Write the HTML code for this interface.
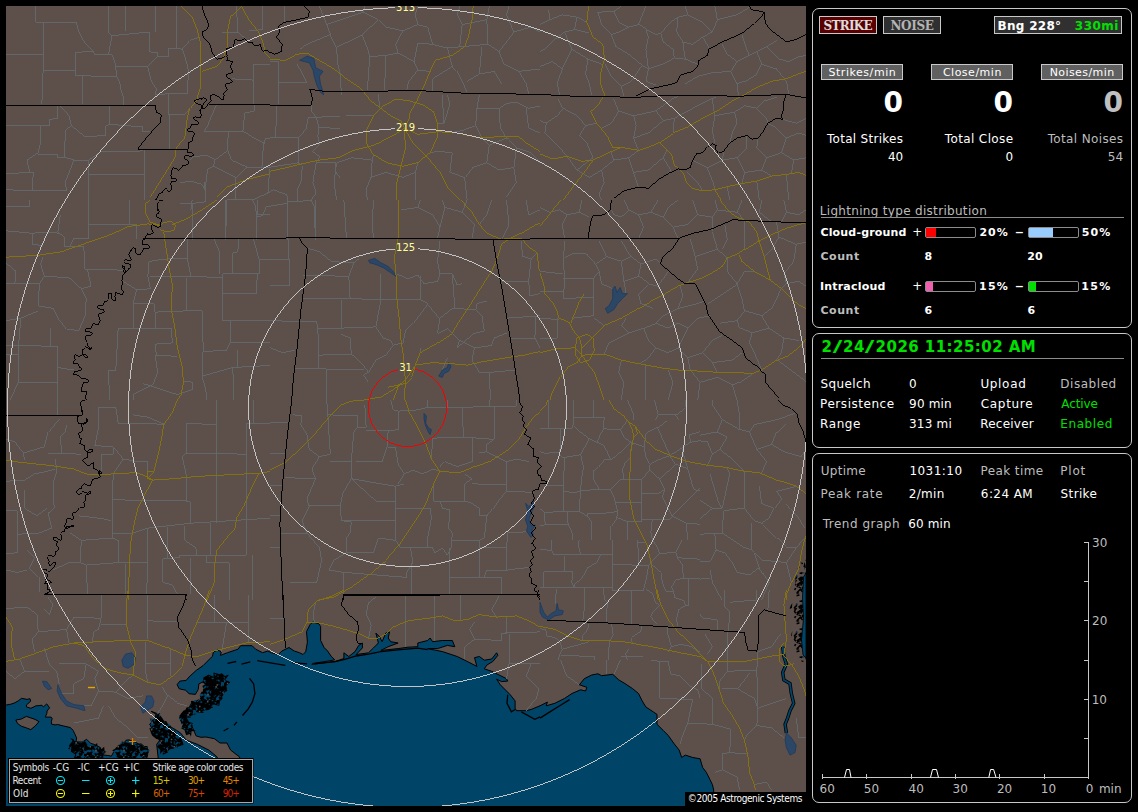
<!DOCTYPE html><html><head><meta charset="utf-8"><title>Lightning</title><style>
html,body{margin:0;padding:0;background:#000;}
body{width:1138px;height:812px;position:relative;overflow:hidden;font-family:"DejaVu Sans","Liberation Sans",sans-serif;font-size:12px;color:#fff;}
.a{position:absolute;white-space:nowrap;line-height:1;}
.panel{position:absolute;left:812px;width:318px;border:1px solid #c8c8c8;border-radius:7px;}
.btn{position:absolute;box-sizing:border-box;border:1px solid #c8c8c8;height:18px;}
.hdr{position:absolute;box-sizing:border-box;border:1px solid #c8c8c8;background:#606060;width:82px;height:16px;}
.g{color:#bdbdbd;}
.gr{color:#00e000;}
.b{font-weight:bold;}
.sf{font-family:"DejaVu Serif","Liberation Serif",serif;}
.cf{font-family:"DejaVu Sans Condensed","DejaVu Sans","Liberation Sans",sans-serif;}
.hr{position:absolute;height:1px;background:#8c8c8c;left:821px;width:303px;}
.bar{position:absolute;box-sizing:border-box;width:51px;height:11px;border:1px solid #8c8c8c;border-radius:2px;}
.bar i{display:block;height:9px;}
.sl{display:inline-block;transform:scaleX(1.75);margin:0 2.4px;}
</style></head><body>
<div id="map" style="position:absolute;left:6px;top:6px;width:800px;height:800px;background:#5d4f4a;overflow:hidden;"><svg width="800" height="800" viewBox="6 6 800 800" style="position:absolute;left:0;top:0;display:block"><defs><pattern id="mp" patternUnits="userSpaceOnUse" width="28" height="28"><rect width="28" height="28" fill="#004468"/><path d="M9.1,4.2 6.4,6.2 3.9,6.6 6.4,4.9 3.9,4.4M6.7,15.4 8.7,13.2 7.0,13.9M26.5,16.2 23.8,14.5 24.2,12.3 23.7,12.5M16.0,15.7 14.1,16.2 14.9,15.4 15.2,12.8 12.5,11.0M19.1,12.0 18.8,14.5 18.0,13.0 16.1,14.7M2.3,8.4 4.5,9.8 3.3,12.7 1.0,12.2M21.2,4.3 20.7,7.0 18.2,7.4 19.9,9.3M9.5,9.8 10.0,9.5 12.0,12.2 11.9,13.2M1.7,19.6 2.2,20.7 1.8,22.0 4.2,21.1 6.8,20.2M17.1,13.8 18.7,11.6 17.2,10.9M24.4,2.3 23.8,0.9 21.6,0.5 21.9,1.7M27.6,19.1 30.4,17.0 28.4,15.4 26.8,15.3M16.5,7.4 14.4,7.6 15.0,6.5M3.5,24.1 4.4,25.5 4.2,27.7 6.9,28.8 7.3,28.2M11.0,13.5 8.4,10.9 6.7,8.9 5.7,6.2M0.0,4.2 2.7,4.9 0.1,3.2M10.5,17.8 11.1,17.6 8.8,17.5 11.7,17.4M8.7,4.0 7.8,2.6 9.8,0.6 6.9,3.3 7.1,1.2M15.2,0.8 14.0,1.6 11.5,3.7 11.7,6.1 10.8,4.5M15.2,14.1 13.5,15.9 16.4,18.1 18.2,20.0 19.7,18.3M14.5,10.0 17.4,11.7 17.3,9.9M16.9,9.6 19.9,12.4 19.1,10.7 17.4,8.9 15.6,9.6M25.2,23.5 27.7,22.6 28.5,24.6 26.2,23.9M19.9,5.6 19.5,6.4 17.0,9.1M20.2,13.0 22.9,14.3 20.9,12.1 18.8,14.5 20.7,12.4M23.1,27.4 25.8,25.4 26.1,22.5 27.9,23.9 25.5,25.4M3.9,27.6 5.9,25.9 4.4,24.6M6.7,16.4 7.0,18.4 4.4,19.9 6.8,20.8M22.8,14.5 20.6,12.4 20.7,14.6 22.3,15.3 24.0,13.2M4.0,17.3 4.3,16.3 4.4,16.6M22.0,3.0 19.3,1.1 16.6,-1.3 16.3,-4.1 18.6,-6.7M9.1,27.3 9.2,28.4 8.9,28.6 8.8,31.3 10.0,33.5M26.4,7.3 28.7,5.5 28.4,5.0 27.8,3.9 28.8,3.4M6.0,8.5 8.3,6.4 9.6,7.4M4.0,24.7 2.3,27.4 1.7,27.4 4.6,29.4M4.5,12.1 3.9,11.6 3.1,9.2 2.3,8.2 2.0,9.4M10.8,14.5 10.8,11.9 13.7,13.6 16.6,11.2M7.4,1.1 6.1,-1.1 5.6,1.4M22.9,7.2 23.2,7.3 23.1,6.3M7.8,22.4 7.4,19.8 10.0,20.6M22.4,2.3 19.8,4.5 19.6,3.6M15.5,25.9 16.2,23.2 17.5,25.8 20.3,24.4M5.1,26.1 3.9,27.7 2.6,27.7 0.7,26.7 -2.2,25.2M0.4,20.5 3.3,20.6 1.8,20.3 2.7,21.2 3.7,21.5M24.9,27.2 26.0,30.1 25.1,32.1 26.3,32.9M11.3,9.7 13.4,6.8 14.1,9.1M12.1,1.6 14.1,3.8 15.1,2.5 13.6,1.2 13.3,-0.8M12.5,7.4 15.3,7.7 13.8,10.4 12.6,9.6M0.0,10.7 -1.3,11.6 -2.8,13.3 -5.3,15.2M4.0,16.4 1.2,15.3 -0.4,15.8 -0.3,17.3M18.4,20.0 17.7,19.0 20.7,16.9 22.0,17.8 19.3,19.8M25.0,17.6 26.2,17.6 28.6,19.1 29.1,21.0 26.1,22.1M22.3,19.9 23.2,17.4 20.5,18.2 23.2,17.5 22.9,14.8M0.5,14.9 0.5,11.9 2.2,13.4M14.1,15.0 14.2,16.5 14.1,18.3 16.2,16.7 17.7,15.1M18.2,12.9 15.7,15.4 14.4,12.6 15.2,10.8M16.8,9.3 18.3,8.1 18.7,5.2 16.0,3.8 17.1,5.0M18.9,8.1 17.6,7.9 19.2,10.9 19.5,9.8 17.0,9.6M8.1,2.1 10.9,1.8 9.5,0.1 12.2,-1.6 12.7,-3.8M14.7,26.7 15.3,27.5 14.0,25.1M10.2,13.9 9.6,11.9 12.3,13.0 11.7,14.3M11.7,10.5 13.7,7.5 15.2,9.6M3.4,25.9 0.4,27.4 -1.0,24.8 -1.7,27.0 -4.2,29.5M21.2,23.9 18.8,25.9 17.5,28.5 16.0,27.1M14.3,5.3 16.0,4.9 13.2,6.5 12.6,8.7M15.5,5.7 12.8,7.1 12.5,8.6M18.0,8.0 20.5,8.3 18.5,7.8M7.9,7.2 10.7,5.7 11.7,4.5 12.0,3.9 10.0,1.9M5.8,25.4 6.1,25.1 5.1,26.6 4.7,26.9M6.8,4.9 4.4,3.3 2.9,3.7 5.3,5.2 4.7,4.7M14.7,10.6 16.2,10.5 16.6,9.7 17.8,9.9M22.1,23.8 20.8,22.3 20.2,21.9M26.7,23.8 24.5,23.3 26.1,25.1M27.1,13.7 26.5,16.3 28.4,18.4M27.2,7.0 25.6,4.9 28.4,2.5M23.1,19.6 20.6,21.3 17.6,19.0 18.0,16.3M20.0,26.9 18.5,27.8 19.7,25.4 17.1,25.6 17.6,24.9M6.3,16.8 6.5,19.8 5.2,18.7M23.5,6.8 21.9,5.3 24.7,6.5 23.5,3.6 23.5,4.7M11.8,7.2 11.3,6.4 11.3,7.6 12.6,6.8 12.0,3.8M8.2,23.7 6.4,26.5 5.3,28.4M6.5,6.2 4.1,6.9 4.8,9.3 4.7,11.8M1.6,16.7 -1.1,13.8 -0.5,13.3 0.7,11.4M12.6,19.9 14.0,22.9 16.6,21.9 14.7,24.5M20.9,0.9 22.2,2.9 25.2,2.6 22.8,0.1 20.3,-0.4M24.8,15.7 24.1,17.3 22.9,19.1M2.5,19.7 1.7,22.3 -0.1,21.4M25.1,0.8 23.6,1.6 23.0,0.9 22.8,2.7M1.7,5.5 4.1,4.5 2.8,7.2M17.3,7.3 18.4,9.9 17.2,11.2 17.8,13.0 20.4,10.4M23.1,3.0 25.9,5.7 25.2,4.2 24.8,4.2 27.3,2.3M22.5,20.7 24.1,21.3 23.1,20.2 22.2,21.9 19.7,20.1M21.1,6.9 22.0,6.8 22.2,4.8M11.9,2.9 10.5,0.5 8.1,0.4M19.9,12.5 17.7,12.3 20.0,10.7M15.1,21.7 16.8,20.4 15.4,19.0M7.1,7.3 5.6,5.8 3.5,8.1 4.0,7.0M11.1,27.8 11.2,28.7 8.9,28.5 6.1,25.5 8.4,23.9M12.6,10.5 10.9,7.8 11.6,9.7 9.7,7.2M14.4,5.0 12.9,6.6 15.6,4.3 16.2,5.0 14.5,4.2M4.0,5.7 1.2,7.1 3.7,9.0 5.6,8.4M10.4,17.4 8.6,19.2 8.9,16.5M2.8,11.1 0.8,11.3 1.7,10.7 0.3,13.6 1.3,13.1M1.4,20.9 0.9,18.0 2.5,19.8 3.4,19.1M11.3,26.4 13.7,25.9 15.7,25.4 18.0,25.1M4.6,0.4 2.4,2.3 1.8,2.7 4.3,4.1 2.4,3.2M4.5,4.8 2.2,4.8 4.0,7.6M5.5,3.5 8.4,3.4 5.7,6.0M10.9,25.3 12.0,27.7 12.8,29.8 13.6,30.5 11.7,30.3M15.8,1.2 13.8,0.3 11.7,3.1 13.6,1.3 15.9,3.4M18.8,18.7 16.5,19.3 16.8,20.1 15.7,19.6M16.3,11.9 15.5,11.9 13.6,9.0 16.5,8.8 16.2,9.5M22.9,23.4 22.3,20.8 21.5,20.0 23.3,20.0M18.4,1.1 15.9,2.5 17.6,2.6M1.5,14.1 2.4,15.8 -0.4,13.2 0.3,14.4M3.1,3.7 1.8,5.6 3.6,6.7 4.9,5.0M23.3,17.1 21.3,19.5 19.9,21.4 17.8,21.4M25.8,5.8 26.5,4.3 25.7,2.5 25.1,3.3M7.8,9.2 5.8,10.9 3.5,11.1 4.3,10.2M24.4,15.5 25.6,17.9 24.1,18.1 26.2,19.6 25.5,18.8M10.3,4.1 11.9,3.7 10.0,5.2 7.3,7.1M7.1,17.9 9.7,20.3 11.1,21.8 9.4,20.5 10.2,20.0M10.2,1.3 8.6,2.3 5.7,-0.7 4.8,-3.1M10.0,6.3 8.8,4.1 8.0,6.1 6.0,3.1 7.8,4.4M12.6,1.8 14.9,3.5 14.3,2.1M0.3,18.1 2.7,18.6 3.1,19.2 3.3,19.2 1.2,16.2M1.7,0.7 0.1,-1.9 1.8,-4.9M15.4,26.3 14.9,26.5 15.8,27.3M11.6,17.2 10.5,16.0 7.8,18.3 9.5,19.6 6.5,21.7M20.9,13.0 21.8,11.1 24.8,9.6 25.6,7.4 28.0,9.9M26.4,7.4 25.0,7.7 24.6,9.4M14.7,7.4 17.2,9.8 14.7,9.8 12.8,12.3 14.8,10.5M4.5,25.6 6.7,24.6 5.2,27.0M17.7,19.4 19.7,19.6 19.5,19.8 16.6,17.0 19.3,15.4M24.8,22.1 25.5,19.6 28.0,17.4 25.1,15.1M26.0,9.7 27.2,6.8 25.0,7.7M1.2,1.9 -1.4,2.4 -2.2,4.3M22.9,25.0 25.2,26.5 26.5,25.8M6.9,5.7 4.1,7.8 6.0,8.6M23.1,17.7 23.0,15.5 24.7,16.4 23.5,15.4M7.3,9.8 4.6,11.4 7.1,13.0 7.7,12.9M8.1,20.9 5.2,21.0 2.8,20.8 0.1,21.2M20.0,23.2 21.9,21.2 18.9,19.4 20.5,22.3 17.5,22.2M13.8,22.3 16.6,22.9 19.3,23.0M16.2,4.4 18.8,2.8 16.8,5.5M21.5,13.7 21.8,11.4 20.8,8.9 23.4,11.3 24.8,10.8M18.1,10.4 16.7,12.8 16.7,12.1 19.0,10.5M12.9,14.9 14.4,15.8 13.5,14.7 11.4,16.8 12.4,18.2M4.7,12.3 5.2,10.0 5.0,12.4 3.4,10.5M8.4,19.7 6.4,17.6 4.9,16.6 5.0,14.5 4.0,12.7" fill="none" stroke="#000" stroke-width="1.5"/><path d="M27.3,20.4h1.5v1.5h-1.5zM2.9,26.9h1.5v1.5h-1.5zM2.8,10.8h1.5v1.5h-1.5zM27.5,22.3h1.5v1.5h-1.5zM20.5,12.2h1.5v1.5h-1.5zM5.5,17.9h1.5v1.5h-1.5zM3.0,5.8h1.5v1.5h-1.5zM10.9,1.0h1.5v1.5h-1.5zM11.2,22.1h1.5v1.5h-1.5zM19.4,14.0h1.5v1.5h-1.5z" fill="#5d4f4a"/></pattern><pattern id="mq" patternUnits="userSpaceOnUse" width="28" height="28"><rect width="28" height="28" fill="#5d4f4a"/><path d="M12.7,15.7 12.4,17.8 10.5,19.6 10.4,20.3M5.2,12.5 2.8,14.4 3.9,11.6M27.5,27.0 28.9,27.9 29.7,29.9 27.1,27.1 29.3,27.7M21.8,9.1 23.8,9.3 24.7,9.2 25.7,9.0 24.3,12.0M27.9,23.5 26.4,25.1 26.5,22.3 26.9,19.9 24.5,18.6M1.9,0.5 -1.1,-1.3 1.3,-1.4 4.2,-2.1 1.7,-1.3M21.8,7.6 20.7,4.6 20.1,7.2M3.8,19.8 1.1,21.6 -0.8,21.9M12.5,5.3 14.1,4.9 13.4,4.2 16.4,1.2 18.6,4.1M16.6,27.9 14.9,27.3 17.0,28.2M2.8,27.7 2.5,24.8 3.1,26.7M10.8,2.1 11.3,0.5 11.9,-0.2M12.7,26.9 14.7,24.7 14.0,25.4 12.9,23.8M17.1,20.3 18.5,23.0 16.7,25.7M24.7,16.9 22.0,14.6 22.1,13.1 23.5,12.4M11.8,25.3 10.5,23.4 11.9,20.8 10.2,21.2M23.9,17.2 22.1,19.7 23.6,17.1 23.1,15.6M1.3,7.9 1.7,5.7 0.9,8.0 3.8,9.0 4.9,9.5M3.9,1.0 3.8,0.1 2.6,-2.7M16.8,2.1 18.1,1.0 21.1,-1.5M15.3,20.6 16.7,18.4 19.5,17.5 17.0,17.3 14.5,19.4M26.4,0.8 26.9,1.6 26.2,2.1 26.8,-0.4M17.9,27.8 19.3,27.1 20.7,27.6 20.3,29.7M2.3,21.0 1.2,18.5 -1.7,21.3M3.2,21.8 5.7,20.4 2.8,19.2 3.8,17.4 1.8,19.8M18.5,12.4 17.4,13.4 15.6,13.0M22.6,25.6 21.9,26.1 20.8,23.9M13.9,23.4 15.2,26.1 13.8,24.2M12.6,7.7 14.6,7.0 14.7,8.0M20.1,23.6 19.8,21.0 17.0,23.3 14.2,24.5 14.6,23.4M22.2,0.5 21.6,-1.3 23.2,-2.7M21.8,22.3 19.5,20.0 19.7,20.8 18.9,18.3 17.1,20.2M7.2,20.0 7.4,17.2 5.7,18.9 6.0,21.6M14.0,27.9 13.4,29.7 15.8,27.2M26.1,20.2 25.8,18.4 28.1,15.4M15.4,18.3 17.2,20.9 17.0,21.8 15.2,23.2 17.1,24.0M20.1,6.0 23.0,8.8 23.2,10.6 22.1,13.0M24.0,9.8 21.2,8.8 20.7,7.5" fill="none" stroke="#000" stroke-width="1.5"/><path d="M25.8,6.1h1.5v1.5h-1.5zM24.3,12.0h1.5v1.5h-1.5zM1.0,14.9h1.5v1.5h-1.5zM19.2,25.6h1.5v1.5h-1.5zM13.2,28.0h1.5v1.5h-1.5zM25.2,14.5h1.5v1.5h-1.5zM19.0,12.3h1.5v1.5h-1.5zM24.6,16.2h1.5v1.5h-1.5zM19.3,21.2h1.5v1.5h-1.5zM12.3,15.6h1.5v1.5h-1.5z" fill="#004468"/></pattern></defs><rect x="6" y="6" width="800" height="800" fill="#5d4f4a"/><path d="M6.2,705 10.9,704.2 14.8,702.8 18.2,700.9 21.6,698.3 27.1,699.4 30,698.7 30.7,701.2 26.5,704.9 26.5,706.9 30.9,708.3 35.8,705.9 39.1,705.6 41.9,705.2 43.5,706.9 46.7,703.9 49.6,707.8 47,711 46.9,713.3 45.3,717.1 51.1,717.1 52.2,718.5 51.4,721.3 51.5,724.1 55.1,724.9 57.6,724.5 63.7,726 70.2,727.5 71.6,728.7 73.3,730.7 74.7,733.7 76.6,737.9 76.1,741.8 82.3,742.1 86.6,739.3 90.6,743.3 94.1,744.4 100.4,747.5 100.6,749.5 105.5,751.8 102.7,754.9 108.9,755.6 111.3,756.3 114.1,751.2 116.3,748.3 119.1,747 123.1,744.1 126.1,740.2 129,739.9 134.1,741.8 136.2,742.5 141.9,746.4 143,747.4 146.1,750.7 142.8,747.8 138.8,747.3 135.8,744.3 141.2,743.9 144.2,746.5 147.2,746.5 147.3,751.2 146.7,757.9 147.6,766.9 158.1,766.9 158.1,757 156.7,744.4 160.9,738.7 153.2,731 149.7,724 154.6,719.8 156,714.1 151.1,711.3 156.7,713.4 158.1,719.1 162.3,721.9 169.4,726.1 176.4,730.3 180.6,733.1 186.2,740.1 197.5,744.4 208.7,750 217.2,757 217.2,766.9 239.7,766.9 239.7,757 230.5,750 227,743 220,743 214.4,738.7 205.9,737 201,737.3 196.1,735.9 191.9,726.1 182,716.9 187.6,710.6 191.9,702.2 200.3,699.4 206.6,692.3 204.5,681.1 198.9,683.9 198.2,689.5 195.4,694.4 189.1,693.7 185.5,690.2 179.2,688.8 177.1,684.6 179.9,681.1 186.2,680.4 189.1,676.9 196.1,670.5 203.1,665.6 208.7,660 212.5,656.2 213.4,651.8 217.8,650.1 221.3,651.8 220.4,655.4 227.5,652.7 238,649.2 240.6,645.7 252.1,645.7 255.6,649.2 262.6,652.7 267.9,651 271.4,652.7 278.4,654.5 281.9,651 289,647.5 294.2,651 299.5,652.7 303,654.5 305.7,651.8 307.4,642.2 306.5,631.6 310.1,624.6 312.7,622 318.8,623.7 320.6,626.4 320.6,640.4 324.1,647.5 327.6,651 331.1,656.2 334.7,659.8 331.1,660.6 313.6,663.3 311.8,664.3 335.3,661.4 343.9,658.5 343.9,652.8 348.8,656.5 355,651.6 358.7,645.4 362.4,643 362.4,647.9 356.2,654.5 368.5,652.8 373.5,647.9 378.4,643 375.9,633.1 379.6,636.8 382.1,641.7 385.8,633.1 389.5,631.9 388.2,638 390.7,641.7 398.1,643 388.2,646.7 380.9,650.4 398.1,648.6 408,647.2 417.8,646.7 417.8,643 427.7,640.5 430.1,638 432.6,641.7 442.4,640.5 452.3,640.5 454.8,646.7 447.4,645.4 437.5,648.6 427.7,648.6 442.4,651.6 457.2,656.5 467.1,661.4 476.9,666.4 474.5,657.7 479.4,656.5 484.3,660.2 491.7,659 496.6,652.8 497.9,655.3 492.9,661.4 486.8,665.1 484.3,668.8 491.7,671.3 499.1,675 506.5,678.7 507.7,681.1 501.6,681.6 496.6,679.2 500.3,684.8 506.5,691 510.2,694.7 515.1,700.9 515.1,708.2 516.4,710.7 526.2,710.7 531.1,709.5 540,705.8 547.4,702.1 546.2,705.8 554.8,703.3 564.6,698.4 572,693.5 580.6,689.8 585.6,691 586.8,687.3 579.4,684.8 584.3,678.7 591.7,675 597.9,673.8 601.6,675.7 612.7,674.3 618.8,679.9 625,683.6 632.4,688.5 638.5,693.5 642.2,700.9 645.9,707 653.3,711.9 657,714.4 657,724.3 663.2,730.4 668.1,735.3 674.3,744 679.2,750.1 681.7,757.5 685.3,755.1 692.7,757.5 700.1,758.8 702.6,767.4 706.3,772.3 710,779.7 712.4,784.6 713.7,790 713.7,811.7 6,812 0,812 0,705Z" fill="#004468" stroke="#000" stroke-width="1" stroke-linejoin="round"/><path d="M15.8,720 21.1,719.1 26.4,716.4 35.1,719.4 39,721.7 35.1,726.1 30.8,729.6 26.4,727.9 21.1,726.1 17.6,723.5Z" fill="#5d4f4a" stroke="#000" stroke-width="1"/><g fill="url(#mp)"><path d="M202.6,678 208.6,674.6 210,675.3 213.6,676.8 213.4,672.5 220.1,674.3 222.5,671.8 223.6,675.2 225.2,676.1 229.2,674.3 225.2,679.9 230.4,682 227.1,685.2 226.7,687.1 227.3,691 224.8,692.1 223.2,695.7 222.1,695.9 223.5,701.2 220,700.7 219.3,705.7 212.4,704.4 213,707.9 211.7,707.8 208.7,710.1 203.4,710.7 204,713 199.6,712.7 194.7,711.8 196.2,714 190.5,715.9 190.7,717.8 186.6,717.8 189.1,722 191,722.5 192.7,723 192.2,729 195.9,730.9 191.6,731.2 190.9,737.9 191.1,738 189.7,734 186.1,735.2 184.6,730.2 181.1,728.2 183.4,722.9 181.3,724.7 180.6,721.8 179,718.2 179.7,715.7 179,716.1 183.6,710.6 185.3,710.1 186.5,707.4 189.4,706.9 191.8,704.1 190.7,700.9 193.4,700.8 199,699.9 200.5,697.6 199.5,695.2 203.5,688.8 202,686 205.8,684.2 202.4,683 203.7,677.1Z"/><path d="M152.6,725.4 149.8,718.4 155.7,719.3 156.7,714.6 158.2,713.7 159.9,713.2 161,716.3 164.4,721.3 167.4,720.8 166.6,721.2 166.3,721.8 170.4,725.2 171.8,730 174,730.4 173.9,729.7 175.8,732.4 178.1,739 180.4,736.9 182.9,742.2 183.5,744.9 181.2,745.5 176.6,747.7 177.3,744.7 173.8,748.8 169.8,749.3 167.5,752.8 165.1,753.8 161.8,755.6 162.2,754.9 160,754.8 160.3,750.1 157.2,746.8 159.2,743.5 159.8,741.5 158,739.3 156.3,738.9 152.1,735.4 151.1,733.3 149.3,728.1 150.3,728.6Z"/><path d="M112,750.4 115.1,748.8 118.9,744.2 118.2,746.3 121.9,741.4 128.7,743.1 130.8,743.6 132.8,742.4 135.7,746.6 138.1,746.5 141.3,744.2 144.2,748.1 144.3,746.5 149.7,750 148.1,755 147.3,758.1 144.8,760.3 142.4,761 141.9,756.7 135.4,757.3 137,758.4 132.6,757.7 129.3,758.2 125.8,759.2 124.3,760.9 122.1,761 120.3,761.3 116.7,757 116.8,758.3 116.2,753.4Z"/><path d="M70.1,738.2 73.4,739 74.1,740.7 81,743.3 82.7,740.8 83.9,741.6 85,741.2 88.2,745.9 94.3,745.8 97.1,743.1 97.6,745.9 101.6,748.9 104.2,746.7 104.6,751.6 106,750.9 103.3,752.5 103.3,758.6 98.8,757.7 97.9,759.1 95.1,760.6 90.4,758.3 88.1,758.4 83.1,757.7 83.7,756.4 77,759.4 75.5,758.9 73.8,757.9 75.3,754.4 71,751.7 70.9,749.3 68.2,748.9 68.9,745.5 72.7,740.7Z"/></g><path d="M805.9,559.5 802.1,562.5 799,562 801.6,562.8 799.2,567.5 796.2,569 797.8,571.8 797.4,573.3 795,575.8 795.5,581.7 795.4,583.8 794,586.3 792.4,587.2 794.3,591.5 792.8,591.5 791.8,594.6 791.4,599.5 790.7,602.4 792.9,601.6 790.5,606 789.6,608.4 793.6,609.8 792.9,612.5 793.3,618.2 792.3,617.4 792.3,622.2 791.5,622.9 792.8,628.8 792,629.3 792.3,630.7 791.5,633.5 791,639.3 788.2,640.2 791.2,641.6 790.6,648 794.2,647.5 793.8,653.8 793.4,654.4 794.2,655.5 798.2,658.4 800.1,658.3 801.9,662 806.3,660.8 805.6,660.4 806.3,654 807.2,652.7 805.7,649.8 805.8,647.7 804.4,646.4 804.4,644.5 804.1,641.9 807.2,638.3 806.8,634.7 807,632.9 804.9,632.6 805.6,627.7 807.4,625.1 806.7,621.8 807.4,619.6 804.2,620 804.7,617.3 807.9,613.5 804,608.7 804.8,607.5 806.4,607.3 805.4,601.5 806.2,598.9 804.3,598.1 806.8,593.6 805.8,593.6 807.1,589.8 807.5,586.5 806.9,586.3 807.5,582.7 804.4,578.4 806.1,576.4 806.5,573.5 807.1,571.5 804.1,568.8 805.8,567.8 805.6,563.7 805.9,564.3Z" fill="url(#mq)"/><path d="M806,573 803.5,577 802.5,598 803.5,618 801.5,640 803,655 806,658Z" fill="#004468" stroke="#000" stroke-width="0.8"/><g fill="none" stroke="#000" stroke-width="1.3"><path d="M507.7,694.7 507,703.3 511.4,711.9 515.1,709.5"/><path d="M521.3,711.9 534.8,719.3 540,716.9"/><path d="M540,718.1 549.9,711.9 559.7,705.8 569.6,699.6"/><path d="M314.3,663.9 335.3,661.7 343.9,659.7 356.2,656 368.5,654.1 380.9,651.6 398.1,649.9 417.8,648.1 427.7,649.6"/><path d="M292.2,662.7 307,663.9"/><path d="M257.3,660.6 264.4,661.9 274.9,663.6 285.4,665.4"/><path d="M227.5,663.3 236.2,661.5"/><path d="M241.5,664.1 250.3,661.9"/><path d="M249.5,678.3 253.7,683.9 254.9,693.7 252.3,702.2 248.1,709.2 242.5,715.5"/><path d="M236.9,721.9 234,725.4"/><path d="M228.4,728.2 223.5,731"/></g><path d="M35.7,6.2 35.7,22.2 76.4,22.2 78.8,32 85,43.1 89.9,48 93.6,51.7M43.1,22.2 43.1,70.2 41.9,103.5M5.9,54.7 43.1,54.7M43.1,70.2 75.1,70.2M75.1,52.2 75.1,75.1 82.5,75.9 82.5,103.5M75.1,52.2 93.6,51.7 94.8,54.7 112.1,54.7 115.8,65.3 116.3,76.4 82.5,75.9M108.4,6.2 108.4,32 112.1,35.7 108.4,54.7M112.1,35.7 149,32 149,51.7 157.7,53 157.7,56.2M125.6,6.2 125.6,30.8M155.2,6.2 155.2,32M176.1,6.2 176.1,48 168.8,48 168.8,56.2 157.7,56.2 147.8,66.5 116.3,66M147.8,66.5 151.5,81.3 156.4,88.7 155.2,94.8M116.3,76.4 119.5,81.3 120.7,88.7 123.2,96.1 123.2,104.7M176.1,48 182.3,49.3 189.7,40.6 199.5,37M182.3,49.3 187.2,64.1 188.5,71.4 187.2,93.6 170,93.6 156.4,94.8M168.8,93.6 168.8,108.4 170,149.3M168.8,114.6 184.8,114.6 189.7,108.4M57.9,105.9 57.9,118.2 49.3,119.5 49.3,125.6 5.9,125.6M40.6,125.6 40.6,142.9 38.2,152.7 27.1,160.1 29.6,172.4 5.9,173.7M60.4,105.9 69,115.8 71.4,125.6 85,136.7 105.9,135.5 105.9,125.6 109.6,124.4 109.6,105.9M71.4,125.6 65.3,130.6 64.5,157.7 57.9,157.7 57.2,154 38.2,154M109.6,124.4 142.9,126.9 142.9,131.8 150.3,131.8M64.5,157.7 73.9,160.1 88.7,160.1 101,151.5 138,151.5 144.1,149.8M73.9,160.1 65.3,182.3 66.5,190.9 32,190.9 33.3,172.4 29.6,172.4M88.7,160.1 88.7,200M88.7,174.9 144.1,174.9 144.1,150.3M144.1,174.9 144.1,200M5.9,189.7 32,190.9M253.7,64.1 253.7,103.5M231.6,78.8 253.7,80.1M253.7,64.1 270,64.1M236.5,6.2 237.7,32 246.4,39.4M262.4,6.2 262.4,29.6 248.8,30.8M221.7,32 237.7,32M204.5,182.3 205.7,200M284.8,6.2 284.8,22.2M270,61.6 278.6,61.6 278.6,103.5M278.6,82.5 307,82.5M297.1,64.1 307,82.5M319.3,6.2 326.7,24.6 330.4,34.5 336.5,46.8 337.7,64.1 340.2,73.9 341.4,94.8M326.7,24.6 363.6,12.3 364.8,6.2M330.4,34.5 307,44.3 299.6,49.3M363.6,12.3 378.4,19.7 385.8,27.1 403,30.8 417.8,24.6 415.3,14.8 417.8,6.2M362.4,34.5 367.3,46.8 369.8,56.7 367.3,89.9M336.5,46.8 362.4,34.5 378.4,19.7M369.8,56.7 385.8,55.4 384.6,89.9M385.8,55.4 398.1,53 395.6,44.3 403,30.8M398.1,53 414.1,61.6 417.8,70.2 408,82.5 406.7,89.9M417.8,70.2 430.1,71.4M417.8,24.6 427.7,27.1 432.6,44.3 417.8,43.1 414.1,61.6M432.6,44.3 447.4,48 459.7,46.8 462.2,24.6 457.2,14.8 459.7,6.2M447.4,48 452.3,66.5 457.2,71.4 462.2,81.3 467.1,92.4M452.3,66.5 432.6,78.8 432.6,91.1M462.2,24.6 486.8,19.7 489.3,6.2M486.8,19.7 488,44.3 459.7,46.8M488,44.3 499.1,51.7 504,64.1 518.8,71.4 540,69M499.1,51.7 513.9,32 531.1,27.1 540,32M513.9,32 506.5,14.8 509,6.2M481.9,46.8 479.4,73.9 467.1,81.3M501.6,83.8 494.2,71.4 479.4,73.9M518.8,71.4 526.2,83.8 528.7,93.6M346.4,115.8 373.5,115.8M378.4,93.6 379.6,108.4M351.3,157.7 336.5,162.6 334.1,182.3 336.5,200M351.3,157.7 372.2,160.1 373.5,155.2M372.2,160.1 371,177.4 366.1,189.7 367.3,200M371,177.4 385.8,172.4 403,177.4 415.3,172.4 417.8,162.6M415.3,172.4 415.3,200M442.4,94.8 443.7,123.2 449.8,103.5 447.4,94.8M443.7,123.2 437.5,123.2M479.4,94.8 476.9,108.4 475.7,125.6 462.2,130.6 449.8,133M475.7,108.4 499.1,108.4 506.5,103.5 516.4,102.2 528.7,108.4 540,105.9M499.1,108.4 500.3,128.1 506.5,138M475.7,125.6 481.9,138 489.3,145.3 486.8,162.6 472,167.5 464.6,177.4 467.1,200M452.3,152.7 449.8,172.4 464.6,177.4M452.3,152.7 437.5,151.5 430.1,152.7M489.3,145.3 506.5,138 516.4,147.8 531.1,152.7 540,162.6M516.4,147.8 513.9,167.5 516.4,182.3 506.5,197.1M486.8,162.6 499.1,170 513.9,167.5M526.2,108.4 528.7,128.1 540,133M548.6,9.9 549.9,19.7 562.2,14.8 577,17.2 586.8,22.2M549.9,19.7 540,24.6M577,17.2 574.5,29.6 564.6,32 554.8,39.4 544.9,49.3 540,51.7M574.5,29.6 589.3,33.3M564.6,32 572,49.3 588,59.1 601.6,64.1M588,59.1 585.6,73.9 589.3,83.8 591.7,94.8M572,49.3 562.2,69 552.3,61.6 540,66.5M562.2,69 557.2,83.8 559.7,94.8M597.9,12.3 613.9,11.1 621.3,6.2M613.9,11.1 618.8,22.2 628.7,27.1 638.5,24.6 645.9,6.2M597.9,12.3 601.6,24.6 611.4,34.5 618.8,32 628.7,27.1M611.4,34.5 616.4,46.8 628.7,54.2 642.2,65.3 648.4,69M645.9,29.6 648.4,37 645.9,49.3 648.4,69 645.9,81.3 655.8,85M645.9,29.6 638.5,24.6M645.9,29.6 655.8,34.5 660.7,33.3 670.6,22.2 678,17.2 687.8,14.8 685.3,6.2M660.7,33.3 663.2,41.9 673,49.3 674.3,57.9 663.2,64.1 648.4,69M674.3,57.9 685.3,59.1 697.7,64.1M678,17.2 676.7,32 682.9,41.9 692.7,44.3 702.6,37 712.4,32 717.4,19.7 714.9,6.2M682.9,41.9 684.1,51.7 685.3,59.1M702.6,37 710,49.3M687.8,14.8 702.6,22.2 712.4,32M717.4,19.7 737.1,14.8 749.4,7.4M605.3,64.1 611.4,76.4 621.3,86.2 631.1,81.3 642.2,65.3M621.3,86.2 623.8,96.1M722.3,44.3 727.2,54.2 737.1,61.6 749.4,55.4 756.8,51.7 766.6,46.8 776.5,40.6M742,34.5 749.4,55.4M737.1,61.6 730.9,71.4 737.1,83.8 738.3,94.8M730.9,71.4 712.4,72.7 697.7,76.4 685.3,83.8M756.8,51.7 761.7,64.1 776.5,69 786.4,81.3M766.6,46.8 779,59.1 788.8,61.6 798.7,56.7 806.1,55.4M761.7,64.1 756.8,73.9 744.5,81.3 737.1,83.8M786.4,81.3 788.8,93.6M558.5,98.5 563.4,108.4 557.2,115.8 546.2,123.2 544.9,133 552.3,140.4 559.7,147.8 567.1,156.4M563.4,108.4 577,115.8 585.6,125.6 579.4,135.5 586.8,142.9 593,157.7M585.6,125.6 596.7,123.2M613.9,98.5 618.8,110.9 611.4,123.2 601.6,128.1M618.8,110.9 633.6,115.8 636.1,125.6 633.6,138 638.5,150.3M633.6,115.8 655.8,110.9 673,98.5 678,96.6M655.8,110.9 663.2,120.7 674.3,118.2 673,133M663.2,120.7 648.4,133 633.6,138M674.3,118.2 692.7,108.4 712.4,98.5 716.1,97.3M712.4,98.5 714.9,115.8 712.4,130.6 714.9,142.9M714.9,115.8 734.6,112.1 744.5,105.9 756.8,108.4 764.2,101 776.5,97.3M734.6,112.1 737.1,123.2 732.2,133 729.7,142.9M756.8,108.4 766.6,118.2 767.9,123.2M540,120.7 546.2,123.2M567.1,156.4 577,170 593,157.7M577,170 589.3,177.4 601.6,170 613.9,160.1 611.4,151.5M601.6,170 604.1,182.3 599.1,194.6 601.6,200M613.9,160.1 628.7,157.7 633.6,172.4 638.5,187.2M628.7,157.7 638.5,150.3M633.6,172.4 648.4,170 663.2,157.7 666.9,150.3M663.2,157.7 670.6,170 668.1,173.7M687.8,172.4 697.7,182.3 702.6,190.9M692.7,160.1 707.5,167.5 722.3,160.1 723.5,151.5M707.5,167.5 712.4,179.8 714.9,189.7M722.3,160.1 737.1,157.7 746.9,147.8 746.9,135.5M737.1,157.7 744.5,172.4 742,183.5M744.5,172.4 761.7,170 771.6,176.1M761.7,170 766.6,157.7 756.8,147.8 758,138.4M766.6,157.7 781.4,152.7 786.4,138 776.5,128.1 767.9,123.2M781.4,152.7 793.7,160.1 806.1,157.7M793.7,160.1 791.3,173.7M786.4,138 798.7,133 806.1,135.5M782.7,119.5 796.2,123.2 806.1,118.2M727.2,186.7 729.7,200M756.8,181.1 759.3,200M786.4,174.4 788.8,200M29.6,200 29.6,206.2 5.9,206.2M88.7,200 88.7,224.6 136.7,224.6 136.7,239.4M88.7,224.6 88.7,238.2 73.9,238.2 70.2,245.6M5.9,230.8 32,233.3 44.3,232 60.4,233.3M60.4,214.8 57.9,232 64.1,237 64.1,246.8 83.8,246.8 85,269 123.2,270.2M32,233.3 32,244.3 43.1,245.6M5.9,262.8 16,271.4 14.8,283.8 5.9,283.8M43.1,256.7 40.6,264.1 44.3,276.4 39.4,283.8 14.8,283.8M44.3,276.4 69,277.6 81.3,288.7 91.1,286.2 87.5,270.2M39.4,283.8 38.2,305.9 53,308.4 57.9,318.2 66.5,329.3 78.8,330.6 85,315.8 86.2,298.5 81.3,288.7M38.2,310.9 20.9,318.2 18.5,345.3 5.9,345.3M18.5,345.3 57.9,346.6 57.9,367.5 73.9,370M50.5,328.1 50.5,346.6M5.9,320.7 20.9,318.2M18.5,345.3 18.5,382.3 57.9,382.3 57.9,367.5M18.5,382.3 9.9,400M57.9,382.3 57.9,400M5.9,354 18.5,354M129.3,200 129.3,224.6M192.2,200 190.9,209.9M225.4,200 225.4,238.2M257.4,200 257.4,214.8 270,214.8M149,261.6 162.6,259.1 187.2,258.6 187.2,238.2M187.2,258.6 190.9,276.4 222.9,277.6 222.9,273.9 259.9,273.4 259.9,259.1 270,259.1M214.3,239.4 219.3,251.7 219.3,273.9M239,239.4 237.7,251.7 232.8,253 232.8,273.4M253.7,239.4 258.7,259.1M149,261.6 147.8,276.4 150.3,288.7 136.7,289.9 123.2,281.3M150.3,276.4 190.9,276.9M136.7,289.9 133,303.5 133,328.1 118.2,328.1 115.8,370 108.4,370 109.6,400M186,277.6 186,310.9 155.2,312.1 154,303.5 133,303.5M155.2,312.1 155.2,328.1 133,328.1M186,310.9 202,310.9 203.2,347.8 202,376.1 232.8,367.5 256.2,366.3 270,365.1M222.9,277.6 222.9,320.7 270,320.7M222.9,293.6 256.2,293.6 257.4,273.9M230.3,320.7 230.3,342.9 226.6,350.3 203.2,351.5M237.7,350.3 237.7,367.5M230.3,342.9 270,342.9M155.2,328.1 171.2,328.1 172.4,342.9 155.2,344.1 156.4,355.2 177.4,356.4M155.2,355.2 157.7,372.4 152.7,384.8 133,394.6 133,400M142.9,383.5 177.4,394.6 192.2,389.7 192.2,382.3 183.5,381.1M202,376.1 205.7,389.7 206.9,400M232.8,367.5 234,400M287.2,200 287.2,238.2M315.6,200 315.6,238.2M343.9,200 346.4,238.2M373.5,200 372.2,224.6 373.5,238.2M288.5,239.4 289.7,285 270,285M270,259.1 288.5,259.1M270,320.7 316.8,321.9 318,334.3 318,368.8 294.6,368.8M270,347.8 282.3,352.7 294.6,350.3M307,248 319.3,251.7 331.6,261.6 353.8,262.8 358.7,259.1M303.3,275.1 348.8,276.4 353.8,262.8M348.8,276.4 350.1,298.5 302,298.5M350.1,298.5 380.9,299.8 380.9,273.9M380.9,299.8 420.3,299.8 420.3,276.4M341.4,299.8 341.4,328.1 318,328.1M341.4,328.1 375.9,326.9 380.9,299.8M341.4,334.3 350.1,338 351.3,354 318,355.2M375.9,326.9 383.3,338 390.7,340.4 393.2,345.3 385.8,355.2 375.9,360.1 368.5,372.4 363.6,374.9 368.5,382.3M351.3,354 361.1,362.6 368.5,372.4M326.7,370 326.7,400M318,368.8 363.6,370M396.9,273.9 408,278.8 417.8,275.1 424,283.8 437.5,281.3 440,273.9M440,240.6 437.5,261.6 440,273.9 452.3,273.9 457.2,285 462.2,283.8M420.3,299.8 427.7,303.5 412.9,323.2 405.5,330.6M427.7,303.5 440,318.2 452.3,308.4 475.7,309.6 476.9,303.5 486.8,301M440,318.2 437.5,333 447.4,328.1 459.7,340.4 457.2,347.8 474.5,333 484.3,330.6 481.9,315.8 475.7,309.6M405.5,330.6 403,342.9 393.2,345.3M420.3,347.8 420.3,352.7M459.7,340.4 474.5,347.8 491.7,345.3 494.2,338 506.5,333M452.3,273.9 454.8,308.4M474.5,347.8 472,360.1 479.4,372.4 489.3,372.4 490.5,400M489.3,372.4 516.4,370M447.4,357.7 442.4,370M521.3,240.6 522.5,256.7 531.1,259.1 537.3,253M501.6,281.3 528.7,281.3 531.1,259.1M528.7,281.3 529.9,296.1 540,293.6M506.5,318.2 540,315.8M536.1,315.8 534.8,338 540,347.8M510.2,338 534.8,338M400.6,209.9 417.8,207.4 432.6,214.8 440,227.1 437.5,238.2M417.8,207.4 420.3,200M442.4,200 444.9,207.4 440,227.1M444.9,207.4 462.2,212.3 474.5,224.6M462.2,212.3 467.1,200M474.5,224.6 472,238.2M491.7,200 486.8,214.8 479.4,224.6M506.5,200 509,224.6 501.6,239.4M526.2,200 528.7,214.8 540,209.9M564.6,240.6 563.4,261.6 564.6,278.8 563.4,298.5M540,271.4 563.4,273.9M563.4,278.8 593,278.8 593,297.3 563.4,298.5M593,297.3 593,315.8 572,318.2M564.6,257.9 574.5,253 586.8,254.2 595.4,264.1 599.1,271.4 593,278.8M599.1,240.6 606.5,256.7 595.4,264.1M606.5,256.7 621.3,261.6 631.1,256.7 641,264.1 638.5,276.4 623.8,281.3 621.3,261.6M621.3,240.6 626.2,249.3 631.1,256.7M641,264.1 655.8,259.1 660.2,263.6M638.5,276.4 648.4,283.8 658.2,286.2 668.1,271.4M540,291.1 563.4,291.1M540,318.2 558.5,319.5M557.2,318.2 557.2,338 540,338M594.2,318.2 604.1,325.6M599.1,271.4 601.6,283.8 612.7,288.7M623.8,281.3 626.2,293.6M648.4,283.8 638.5,293.6 641,303.5 653.3,308.4M658.2,286.2 663.2,294.8M626.2,318.2 621.3,325.6 628.7,333 643.5,328.1 655.8,323.2 663.2,315.8 678,308.4 682.9,296.1 680.4,286.2M655.8,323.2 668.1,328.1 678,323.2 687.8,328.1 697.7,318.2 710,315.8M678,308.4 697.7,303.5 705.1,301M604.1,354 609,342.9 618.8,338 628.7,333M643.5,328.1 648.4,340.4 655.8,347.8 648.4,357.7 638.5,363.8M655.8,347.8 668.1,352.7 678,347.8 687.8,328.1M678,347.8 687.8,357.7 690.3,370M687.8,357.7 702.6,352.7 712.4,340.4 722.3,335.5M702.6,352.7 712.4,362.6 717.4,372.4M712.4,362.6 732.2,360.1 742,352.7M621.3,360.1 618.8,372.4 623.8,382.3 621.3,400M645.9,365.1 645.9,400M668.1,370 673,382.3 668.1,400M690.3,370 700.1,382.3 697.7,400M700.1,382.3 717.4,377.4 732.2,384.8 739.5,382.3 751.9,373.7M732.2,384.8 737.1,400M690.3,239.4 695.2,256.7 697.7,269 687.8,282.5M695.2,256.7 717.4,249.3 727.2,257.9M717.4,249.3 712.4,232M724.8,224.6 727.2,239.4 722.3,249.3M727.2,257.9 727.2,271.4 737.1,283.8 744.5,271.4 754.3,271.4M737.1,283.8 707.5,303.5M737.1,283.8 742,298.5 744.5,310.9 737.1,320.7 719.8,323.2M744.5,310.9 761.7,315.8 771.6,308.4 781.4,288.7M761.7,315.8 769.1,328.1 783.9,338 798.7,340.4M769.1,328.1 751.9,333 749.4,342.9 754.3,352.7 761.7,370M737.1,320.7 739.5,328.1 751.9,333M744.5,220.9 744.5,249.3M776.5,222.2 779,237 796.2,244.3 806.1,241.9M779,237 771.6,249.3 764.2,256.7M796.2,244.3 793.7,261.6 783.9,273.9 786.4,283.8 798.7,281.3 806.1,286.2M786.4,283.8 781.4,288.7M776.5,360.1 806.1,382.3M783.9,338 781.4,352.7 776.5,360.1M623.8,200 628.7,209.9 621.3,217.2 613.9,214.8 611.4,209.9M628.7,209.9 638.5,214.8 650.9,212.3 658.2,200M638.5,214.8 643.5,227.1 638.5,238.9M650.9,212.3 663.2,217.2 673,227.1 678,238.2M663.2,217.2 668.1,207.4 678,200M673,227.1 687.8,224.6 697.7,214.8 692.7,200M697.7,214.8 712.4,217.2 717.4,209.9 714.9,200M712.4,217.2 712.4,230.8M717.4,209.9 737.1,212.3 742,200M737.1,212.3 744.5,220.4M761.7,200 759.3,212.3 771.6,221.7M783.9,200 786.4,212.3 798.7,214.8 806.1,209.9M786.4,212.3 781.4,222.2M540,207.4 549.9,212.3 559.7,209.9 567.1,214.8 562.2,224.6 564.6,238.9M567.1,214.8 579.4,212.3 589.3,217.2M579.4,212.3 581.9,200M57.9,400 57.9,415.3M98.5,407.4 98.5,427.1 94.8,445.6 113.3,446.8 113.3,454.2 101,454.2 101,471.4M98.5,407.4 115.8,407.4 118.2,423.4 147.8,423.4 165.1,424.6M216.8,400 216.8,424.6 186,423.4 186,453 246.4,454.2 246.4,423.4 270,423.4M216.8,424.6 216.8,523.2M253.7,400 253.7,423.4M133,414.8 147.8,417.2 165.1,424.6M113.3,446.8 123.2,459.1 138,461.6 147.8,461.6 147.8,471.4M123.2,459.1 113.3,473.9 112.1,498.5 112.1,538 81.3,540.4 80.1,562.6 86.2,565.1 87.5,594.6M186,453 182.3,456.7 186,473.9 186,501 190.9,502.2 190.9,523.2 147.8,528.1 133,533 112.1,533M112.1,499.8 186,501M246.4,454.2 246.4,555.2 179.8,555.2 179.8,557.7 162.6,558.9 162.6,582.3 172.4,584.8 177.4,594.1M190.9,523.2 270,518.2M210.6,523.2 210.6,555.2M184.8,525.6 184.8,540.4 195.8,547.8 197.1,555.2M167.5,526.9 167.5,557.7M147.8,528.1 147.8,562.6 118.2,562.6 118.2,540.4 112.1,538M147.8,562.6 146.6,594.1M125.6,563.8 125.6,594.1M86.2,565.1 118.2,562.6M206.9,555.2 206.9,562.6 229.1,562.6 229.1,600M252.5,555.2 252.5,600M190.9,557.7 190.9,594.1M5.9,439.4 14.8,441.9 23.4,453 24.6,460.4M23.4,453 44.3,446.8 48,432 59.1,418.5M48,453 81.3,454.2M66.5,424.6 65.3,432 60.4,437 61.6,453M55.4,459.1 56.7,471.4 53,483.8 54.2,508.4 48,513.3 51.7,528.1M5.9,481.3 24.6,480.1 34.5,473.9 55.4,469M24.6,489.9 24.6,508.4 37,515.8 46.8,508.4M5.9,510.9 17.2,510.9 17.2,552.7 5.9,554M51.7,528.1 39.4,533 17.2,534.3M78.8,515.8 98.5,518.2 110.9,520.7M70.2,533 81.3,540.4M53,570 69,562.6 80.1,562.6M27.1,550.3 34.5,557.7 29.6,567.5 39.4,577.4 39.4,592.2M5.9,570 17.2,572.4 27.1,570M326.7,400 327.9,414.8 357.5,416 357.5,427.1 353.8,432 351.3,461.6 351.3,478.8 342.7,493.6 340.2,505.9 341.4,520.7 395.6,520.7 395.6,486.2 404.3,483.8M293.4,414.8 302,416 300.8,424.6 307,434.5 309.4,449.3 319.3,456.7 311.9,469 315.6,478.8 284.8,477.6M327.9,414.8 329.1,437 330.4,454.2 319.3,456.7M330.4,461.6 351.3,461.6M315.6,478.8 307,498.5 309.4,505.9 340.2,505.9M309.4,505.9 302,520.7 307,533 281.1,533M307,533 319.3,547.8 321.7,560.1 316.8,582.3 289.7,582.3M341.4,520.7 351.3,521.9 350.1,533 346.4,538 346.4,552.7 334.1,560.1 329.1,570 343.9,572.4 343.9,594.6M395.6,486.2 351.3,478.8 375.9,501 395.6,501M395.6,520.7 395.6,540.4 378.4,538 373.5,552.7 346.4,552.7M395.6,540.4 400.6,547.8 410.4,547.8 412.9,562.6 406.7,572.4 406.7,577.4 343.9,572.4M411.7,562.6 411.7,594.6M364.8,404.9 366.1,427.1 357.5,427.1M366.1,430.8 388.2,430.8 387,446.8 382.1,461.6 356.2,461.6M388.2,430.8 398.1,429.6 398.1,411.1 393.2,409.9 390.7,400M398.1,411.1 417.8,409.9 427.7,407.4 427.7,400M387,446.8 395.6,448 398.1,464.1 404.3,473.9 412.9,470.2 422.7,473.9 432.6,469 440,471.4M404.3,473.9 398.1,483.8M427.7,407.4 462.2,407.4 463.4,437 432.6,438.2 431.4,459.1M463.4,407.4 494.2,406.2 494.2,439.4 463.4,437M447.4,400 447.4,407.4M489.3,400 489.3,406.2M516.4,400 516.4,406.2 494.2,406.2M472,437 472,461.6 457.2,466.5 444.9,461.6 440,466.5M494.2,439.4 486.8,444.3 486.8,451.7 506.5,461.6 516.4,459.1 528.7,461.6M479.4,453 486.8,451.7M506.5,461.6 506.5,491.1 533.6,492.4M464.6,473.9 472,478.8 464.6,483.8 464.6,501 433.8,501 433.8,485M472,483.8 506.5,485M464.6,501 472,503.5 479.4,508.4 479.4,515.8 486.8,515.8 496.6,503.5 506.5,491.1M395.6,508.4 430.1,508.4 431.4,518.2 427.7,538 427.7,547.8 410.4,547.8M440,501 442.4,508.4 449.8,509.6 448.6,528.1 452.3,533 451.1,547.8 447.4,555.2 442.4,547.8 435.1,552.7 432.6,547.8 427.7,547.8M451.1,540.4 479.4,540.4 479.4,577.4 449.8,577.4 449.8,547.8M486.8,515.8 484.3,538 479.4,540.4M479.4,547.8 506.5,547.8 507.7,533M507.7,533 526.2,531.8M506.5,547.8 506.5,570 486.8,570 484.3,577.4 479.4,577.4M506.5,570 528.7,567.5M449.8,577.4 449.8,594.6M501.6,577.4 501.6,594.6M479.4,577.4 501.6,577.4M270,422.2 288.5,422.2M270,453 284.8,453M270,485 282.3,485M270,515.8 279.9,515.8M270,547.8 279.9,547.8M548.6,400 548.6,427.1 540,428.3M573.3,400 573.3,417.2 604.1,417.2 605.3,428.3 621.3,429.6 626.2,422.2M593,400 593,417.2M540,453 560.9,451.7 564.6,459.1 579.4,455.4 589.3,440.6 573.3,429.6 573.3,417.2M589.3,440.6 601.6,444.3 606.5,459.1 618.8,454.2 631.1,439.4M606.5,459.1 594.2,471.4 596.7,483.8 611.4,491.1 616.4,508.4 618.8,515.8 611.4,530.6 612.7,562.6 579.4,561.4 578.2,540.4 551.1,540.4 552.3,555.2 564.6,557.7 564.6,570 543.7,571.2 543.7,589.7 557.2,589.7M564.6,459.1 563.4,483.8 564.6,510.9 543.7,512.1 540,512.1M563.4,483.8 540,485M580.6,471.4 580.6,491.1 563.4,491.1M580.6,491.1 599.1,486.2M564.6,510.9 584.3,512.1 593,523.2 590.5,538 578.2,540.4M568.3,513.3 572,536.7M616.4,508.4 641,508.4 641,478.8 611.4,478.8M641,478.8 648.4,469 663.2,481.3 664.4,493.6 642.2,494.8M648.4,469 650.9,464.1 668.1,454.2M663.2,481.3 678,464.1 674.3,456.7M627.5,400 633.6,414.8 633.6,420.9M654.6,400 658.2,414.8 675.5,414.8 685.3,407.4 685.3,400M658.2,414.8 648.4,432M675.5,414.8 687.8,434.5 690.3,439.4 707.5,441.9 712.4,454.2 707.5,465.3M655.8,424.6 663.2,444.3 673,456.7M690.3,439.4 702.6,434.5 717.4,432 727.2,437 719.8,449.3 712.4,454.2M717.4,432 722.3,419.7 712.4,404.9 712.4,400M722.3,419.7 739.5,429.6 749.4,432 754.3,424.6 776.5,419.7 796.2,412.3M737.1,400 739.5,414.8 739.5,429.6M749.4,432 756.8,449.3 766.6,461.6 761.7,472.7M756.8,449.3 771.6,444.3 776.5,432 786.4,422.2M771.6,444.3 783.9,451.7 801.1,456.7 806.1,449.3M719.8,449.3 732.2,459.1 744.5,471.4M678,464.1 687.8,488.7 697.7,498.5 712.4,508.4 722.3,508.4 729.7,473.9 727.2,467.7M687.8,488.7 670.6,510.9 674.3,518.2 687.8,523.2 697.7,520.7 712.4,508.4M710,473.9 717.4,498.5 722.3,508.4M744.5,471.4 744.5,508.4 729.7,509.6 723.5,510.9 722.3,533 698.9,534.3 697.7,520.7M744.5,508.4 754.3,520.7 761.7,523.2 776.5,538 786.4,547.8 796.2,547.8 804.8,538M759.3,486.2 761.7,503.5 774,508.4 781.4,498.5 776.5,491.1 796.2,486.2M774,508.4 769.1,518.2 761.7,523.2M786.4,503.5 798.7,518.2 804.8,528.1M751.9,523.2 751.9,550.3 744.5,547.8 722.3,533M714.9,534.3 716.1,550.3 724.8,552.7 732.2,562.6 737.1,572.4 749.4,574.9 759.3,567.5 754.3,552.7 751.9,550.3M641,508.4 642.2,520.7 653.3,518.2 663.2,523.2 665.6,535.5 678,534.3 687.8,523.2M653.3,518.2 655.8,538 660.7,547.8 658.2,557.7 648.4,565.1 613.9,565.1M660.7,547.8 675.5,552.7 682.9,542.9 687.8,523.2M675.5,552.7 682.9,572.4 682.9,579.8 673,582.3 673,600M682.9,562.6 710,561.4 716.1,550.3M710,570 712.4,582.3 717.4,592.2 722.3,600M689,579.8 689,600M682.9,579.8 710,578.6M648.4,565.1 648.4,582.3 638.5,600M612.7,562.6 612.7,592.2 601.6,600M599.1,557.7 584.3,570 574.5,584.8M557.2,589.7 557.2,600M584.3,589.7 584.3,600M543.7,589.7 612.7,589.7M627.5,518.2 627.5,542.9 641,545.3M754.3,552.7 761.7,560.1 786.4,562.6 796.2,547.8M786.4,562.6 791.3,582.3M759.3,567.5 769.1,582.3 761.7,600M48,597.4 53,604.8 49.3,614.6 44.3,609.7M5.9,608.5 27.1,607.2 37,614.6 38.2,631.9 32,639.3 34.5,651.6M38.2,631.9 66.5,629.4 73.9,617.1 101,618.3 101,594.9M66.5,629.4 69,643M101,618.3 98.5,629.4 93.6,631.9 92.4,643M147.8,594.9 147.8,639.3M101,624.5 125.6,624.5M147.8,620.8 177.4,622M214.3,594.9 214.3,622 197.1,622M214.3,622 248.8,622 248.8,594.9M248.8,622 248.8,643M226.6,622 221.7,651.6M44.3,647.9 49.3,663.9 56.7,671.3 59.1,683.6M19.7,659 24.6,671.3 14.8,678.7 5.9,671.3M24.6,671.3 49.3,671.3M59.1,663.9 86.2,663.9 83.8,678.7 73.9,683.6 73.9,693.5 59.1,693.5M86.2,663.9 98.5,671.3 94.8,678.7 98.5,691 115.8,692.2 125.6,681.1 133,675M115.8,692.2 128.1,698.4 142.9,695.9M98.5,691 91.1,705.8 83.8,705.8M108.4,705.8 115.8,718.1 128.1,728 138,737.8 147.8,737.8M103.5,705.8 98.5,718.1 73.9,723M145.3,641.7 145.3,671.3 147.8,682.4M145.3,663.9 170,663.9M170,647.9 170,676.2M162.6,687.3 167.5,695.9 162.6,705.8 157.7,713.2M167.5,695.9 177.4,703.3 187.2,705.8M270,618.3 283.5,618.3M315.6,602.3 313.1,614.6 314.3,621.5M375.9,596.2 368.5,602.3 366.1,614.6 371,624.5 368.5,638M405,594.9 405,646.7M434.6,594.9 434.6,640.5M460.9,594.9 460.9,620.8M449.8,590 449.8,594.4M501.6,590 501.6,594.4M499.1,596.2 491.7,609.7 496.6,617.1M474.5,622 469.5,629.4 474.5,639.3 464.6,646.7 464.6,659M474.5,639.3 501.6,640.5 501.6,633.1 506.5,633.1 506.5,617.1M501.6,633.1 540,631.9M509,634.3 509,663.9 540,663.9M509,663.9 506.5,678.7M531.1,663.9 526.2,676.2 538.5,688.5 536.1,698.4 526.2,710.7M556,590 556,619.6M584.3,590 584.3,622M606.5,590 606.5,623.3M631.1,590 632.4,624.5M650.9,590 655.8,602.3 653.3,612.2 650.9,617.1 658.2,625.7M687.8,590 687.8,606 678,609.7 676.7,619.6 682.9,627M687.8,606 697.7,609.7 702.6,618.3 717.4,619.6 717.4,630.6M724.8,590 724.8,607.2 729.7,612.2 728.5,630.6M756.8,590 756.8,599.9 729.7,602.3M769.1,590 767.9,609.7M559.7,656.5 564.6,649.1 584.3,636.8 589.3,624.5M559.7,656.5 606.5,656.5 606.5,643M559.7,656.5 567.1,676.2 579.4,684.8M606.5,656.5 606.5,673.8M611.4,624.5 612.7,640.5M641,627 638.5,636.8 626.2,649.1 618.8,663.9 613.9,673.8M626.2,649.1 633.6,654.1 650.9,655.3 650.9,660.2 659.5,661.4 659.5,698.4 692.7,699.6 690.3,710.7 687.8,723 681.7,737.8 680.4,744M668.1,629.4 670.6,649.1M659.5,661.4 668.1,661.4 670.6,673.8 680.4,676.2 690.3,686.1 697.7,689.8 700.1,698.4M705.1,634.3 712.4,646.7 707.5,654.1M701.4,663.9 701.4,688.5 712.4,698.4 712.4,724.3 730.9,729.2 729.7,752.6 722.3,753.8 722.3,769.8 714.9,772.3M687.8,723 712.4,724.3M727.2,631.9 727.2,671.3 756.8,670.1 758,651.6M756.8,670.1 758,708.2 786.4,698.4M727.2,671.3 719.8,681.1 719.8,691M749.4,672.5 737.1,688.5 722.3,688.5M737.1,688.5 754.3,698.4 758,708.2M758,708.2 756.8,725.5 746.9,735.3 744.5,740.3M756.8,725.5 771.6,728 783.9,737.8M796.2,718.1 798.7,737.8 806.1,737.8M729.7,752.6 746.9,753.8M722.3,769.8 737.1,777.2 739.5,790M754.3,784.6 766.6,782.2 771.6,790M780.2,634.3 771.6,646.7 758,651.6M216.2,105.2 211,117.2 207.6,125.9 204.1,131 228.3,131.9 242.9,131 244.7,112.9 254.1,111.2 254.1,105.2M228.3,131.9 227.4,150 214.5,159.5 205.9,155.2 192.9,156.9 190.3,159.5M242.9,131 252.4,137.1 264.5,143.1 265.3,138.8 275.7,137.1 276.6,105.2M275.7,137.1 299,137.1 298.1,162.9 302.4,165.5 300.7,182.8 297.2,189.7 297.2,201.7 287.8,201.7 287.8,240M299,137.1 305.9,129.3 308.4,117.2 316.2,117.2 311,110.3 311.9,105.2M316.2,117.2 318.8,127.6 317.9,136.2 319.7,144.8 312.8,151.7 319.7,156.9 316.2,162.9 314.5,172.4 312.8,182.8 316.2,193.1 311,200 314.5,206.9 315.3,240M318.8,127.6 340,128.4M316.2,117.2 340,116.4M316.2,162.9 335.2,162.1 336,172.4 340,177.6M263.6,143.1 261.9,167.2 269.7,167.2 298.1,162.9M227.4,150 231.7,160.3 247.2,167.2 261.9,167.2M247.2,167.2 236,177.6 235.2,199.1 226.6,200 225.7,240M214.5,159.5 213.6,166.4 236,177.6M213.6,166.4 207.6,169 205.9,182.8 205.9,201.7 192.9,203.4 192.1,240M180,182.8 190.3,181 202.4,184.5 205.9,189.7M180,203.4 192.9,203.4M235.2,199.1 252.4,200 255.9,206.9 256.7,240M252.4,200 267.9,193.1 269.7,169M267.9,193.1 273.1,189.7 286.9,194.8 287.8,201.7M256.7,217.2 262.8,215.5 266.2,206.9 286.9,203.4M311,200 297.2,201.7" fill="none" stroke="#62676a" stroke-width="0.99" shape-rendering="crispEdges"/><rect x="540" y="420" width="160" height="120" fill="#5d4f4a"/><rect x="540" y="540" width="160" height="120" fill="#5d4f4a"/><path d="M548.9,420 548.9,428.1 540,428.1M548.9,428.1 560.7,428.9 559.9,452.5 544.4,453.2 540,451.8M560.7,428.9 571.8,428.1 574,423 573.2,420M574,425.9 579.2,431.1 588.8,438.5 584.3,447.3 580.6,454.7 563.6,457.7 559.9,455.5M588.8,438.5 596.9,442.2 600.6,434 603.5,428.9 603.5,420M603.5,428.9 620.5,429.6 625.7,423 626.4,420M620.5,429.6 624.2,437.7 630.9,442.2 616.8,455.5 610.9,459.9 605,459.2 598.4,467.3 593.2,471 593.2,479.1 596.9,485 599.1,489.4 580.6,490.6 581.4,479.1 583.6,467.3 580.6,454.7M596.9,442.2 603.5,445.1 607.2,451.8 610.9,459.9M630.9,442.2 644.2,446.6 645.6,455.5 650.1,464.3 649.3,469.5 641.2,479.1 620.5,479.1 610.2,489.4 599.1,489.4M623.5,479.1 622.7,468.8 624.9,463.6 630.1,458.4 631.6,442.2M641.2,479.1 641.9,521.9 627.9,521.9 627.9,540M610.2,489.4 613.9,496.8 615.3,502 641.9,502M615.3,502 617.6,511.6 616.8,517.5 610.9,526.4 610.9,540M616.8,517.5 627.9,521.9M580.6,490.6 579.2,511.6 563.6,511.6 563.6,485 564.4,457.7M563.6,485 547.4,485 545.9,483.5M563.6,490.9 574,493.1 580.6,490.6M540,508.6 544.4,512.3 563.6,511.6M544.4,512.3 545.2,524.9 540,525.6M567.3,512.3 568.1,524.9 571.8,530.8 572.5,540M545.2,524.9 568.1,524.9M579.2,511.6 587.3,516 587.3,513.1 605,513.1 617.6,511.6M587.3,516 591.7,521.9 591,540M649.3,469.5 659.7,479.1 664.8,489.4 658.2,493.9 641.9,493.9M659.7,479.1 675.9,464.3 670,455.5 658.2,459.9 650.1,464.3M664.8,489.4 662.6,496.8 668.5,508.6 672.2,516 668.5,519 652.3,519.7 641.9,519M652.3,519.7 650.8,532.3 652.3,540M672.2,516 699.6,488M672.2,516 686.3,523.4 700,524.2M686.3,523.4 687.7,540M670,455.5 657.5,427.4 667.1,420M645.6,434.8 649.3,431.1 657.5,427.4M644.2,446.6 645.6,434.8M670,455.5 681.8,448.1 690.7,442.2 700,440.7M690.7,442.2 689.2,434.8 700,431.8M681.8,448.1 687.7,468.8 693.6,489.4 700,490.9M675.9,464.3 687.7,468.8M551.1,540 551.8,550.3 554,554.8 580.6,554 578.4,545.9 579.2,540M540,549.6 551.8,550.3M580.6,554 612.4,554 612.4,540M564.4,555.5 564.4,571 543.7,571.8 543,587.3 540,587.3M564.4,571 572.5,571.8 571.8,582.8 574,587.3M600.6,554.8 596.9,562.2 587.3,568.1 582.8,576.9 575.5,582.8 574,587.3 543,587.3M612.4,554 612.4,590.2 643.4,591 646.4,578.4 648.6,565.1 634.6,565.1 613.1,564.4M574,587.3 612.4,588M637.5,540 639,564.4M637.5,542.2 646.4,542.2M648.6,565.1 659.7,553.3 656.7,545.9 652.3,540M659.7,553.3 675.9,552.6 681.8,540M675.9,552.6 677.4,557.7 682.6,565.1 683.3,578.4 700,578.7M677.4,557.7 700,559.2M652.3,565.1 661.1,572.5 662.6,582.8 665.6,591 673.7,591.7 671.5,587.3 675.9,579.9 683.3,578.4M673.7,591.7 674.4,597.6 684,600.6 685.5,605.7 688.5,605.7 688.5,579.2M685.5,605.7 678.9,609.4 676.7,618.3 677.4,626.4M646.4,589.5 652.3,593.2 655.2,602 659.7,605.7 653.8,610.9 650.8,616.8 656.7,624.2M556.3,588.8 555.5,603.5M584.3,588 584.3,608 582.8,621.3M603.5,588 604.3,599.1 607.2,602 606.5,622.7M631.6,591 631.6,623.5M540,628.6 545.9,630.1 546.6,636 554.8,637.5 559.9,641.9 562.2,649.3 559.2,655.2 558.5,660M562.2,649.3 588.8,641.9M588.8,623.5 587.3,630.1 582.1,636 582.8,639.7M611.7,624.2 613.1,634.6 609.4,641.9 608,660M641.9,626.4 640.5,631.6 631.6,637.5 632.3,643.4M667.1,627.2 667.8,634.6 671.5,646.4 668.5,652.3M671.5,646.4 680.4,644.2 690.7,646.4 700,652.3M628.6,649.3 625.7,653.8 627.2,660M560.7,655.2 594.7,656.7 594.7,660M620.5,656.7 643.4,656.7" fill="none" stroke="#62676a" stroke-width="0.99" shape-rendering="crispEdges"/><g fill="#2c4666" stroke="#1d3a5e" stroke-width="0.8"><path d="M299.6,60.4 307,56.2 313.9,58.6 315.6,67.7 323,71.4 319.3,76.4 320.5,83.8 323.7,94.8 320.5,92.4 316.8,85 314.3,76.4 313.1,70.2 309.4,62.8 304.5,61.6Z"/><path d="M368.5,260.4 374.7,258.4 380.9,262.8 388.2,266.5 394.4,272.7 396.1,276.4 390.7,272.7 383.3,267.7 375.9,264.5 369.8,262.8Z"/><path d="M438.8,376.1 442.4,370 447.4,367.5 448.6,362.6 451.1,366.3 448.6,371.2 443.7,373.7 442.4,377.4Z"/><path d="M605.3,308.4 609,305.9 612.7,298.5 612.7,288.7 615.1,286.2 616.9,292.4 620.1,287.5 622.5,293.6 627.5,293.6 622.5,298.5 617.6,303.5 613.9,309.6 607.7,313.3Z"/><path d="M424,413.5 426.4,416 425.7,423.4 428.9,428.3 431.4,429.6 430.1,434.5 427.7,430.8 425.2,424.6 424,418.5Z"/><path d="M121.9,660.2 125.6,654.1 131.8,652.8 135.5,657.7 134.3,663.9 128.1,668.3 123.2,666.4Z"/><path d="M140.4,707 145.3,702.1 146.6,695.9 151.5,695.9 154,700.9 152.7,707 146.6,710.7 142.9,713.2Z"/><path d="M42.4,681.1 46.8,681.6 51.7,688.5 48,689.8 44.3,686.1Z"/><path d="M57.9,684.8 61.6,693.5 66.5,700.9 73.9,704.6 83.8,705.8 85,710.7 76.4,708.2 66.5,705.8 60.4,698.4 57.2,691Z"/><path d="M540,602.3 543.7,612.2 547.4,617.1 551.1,613.4 556,610.9 557.2,603.5 558.5,609.7 563.4,610.9 562.2,614.6 554.8,615.9 548.6,620.1 542.5,617.1 540,612.2Z"/><path d="M786.4,732.9 791.3,737.8 796.2,745.2 795,752.6 790,755.1 786.4,747.7 785.1,740.3Z"/><path d="M525.5,503.2 528.8,506.5 532.1,504.3 533.2,500.9 534.3,506.5 531,513.1 528.8,519.8 531,525.3 535.4,525.3 532.1,529.8 533.2,535.3 531,537.5 526.6,530.9 527.7,526.4 525.5,519.8 527.7,510.9Z"/></g><path d="M782.7,646.7 783.9,656.5 786.4,663.9 782.7,672.5 783.9,679.9 790,683.6 791.3,693.5 793.7,703.3 790,710.7 787.6,718.1 785.1,724.3 786.4,732.9" fill="none" stroke="#000" stroke-width="3.4"/><path d="M782.7,646.7 783.9,656.5 786.4,663.9 782.7,672.5 783.9,679.9 790,683.6 791.3,693.5 793.7,703.3 790,710.7 787.6,718.1 785.1,724.3 786.4,732.9" fill="none" stroke="#004468" stroke-width="1.8"/><path d="M181.1,6.2 192.2,17.2 197.1,29.6 200.8,44.3 200.8,86.2 197.1,98.5 189.7,108.4 187.2,118.2 184.8,138 176.1,147.8 174.9,157.7 162.6,177.4 150.3,197.1M241.4,6.2 230.3,17.2 227.9,29.6 227.9,44.3 222.9,59.1 216.8,66.5 202,71.4M241.4,6.2 248.8,19.7 258.7,32 263.6,44.3 264.8,53 270,57.9M216.8,197.1 226.6,187.2 246.4,179.8 270,173.7M270,59.1 284.8,60.4 297.1,54.2 307,53 319.3,60.4 334.1,69 346.4,78.8 361.1,88.7 371,101 380.9,108.4 390.7,115.8 400.6,120.7 404.3,128.1M473.2,6.2 472,19.7 468.3,37 464.6,46.8 452.3,55.4 435.1,60.4 430.1,71.4 424,86.2 417.8,98.5 410.4,110.9 409.2,118.2 404.3,128.1M395.6,99.3 408,100.5 422.7,104.7 433.8,112.1 437.5,123.2 437,138 430.1,152.7 417.8,162.6 403,166.3 385.8,162.6 373.5,155.2 366.1,142.9 366.1,130.6 373.5,115.8 383.3,105.9 395.6,99.3M270,171.2 287.2,167.5 302,163.8 319.3,160.1 339,157.7 353.8,150.3 368.5,146.6 380.9,141.7 395.6,134.3 404.3,128.1M404.3,128.1 417.8,134.3 437.5,131.8 457.2,133 479.4,138 499.1,136.7 518.8,136.7 526.2,142.9 540,151.5M404.3,128.1 405.5,147.8 401.8,162.6 396.9,182.3 396.9,200M404.3,128.1 412.9,142.9 427.7,157.7 440,172.4 447.4,187.2 459.7,200M588.5,6.2 586.8,22.2 593,37 602.8,44.3 604.5,59.1 600.4,73.9 600.4,83.8 604.5,94.8 599.1,103.5 590.5,110.9 596.7,123.2 607.7,136.7 612.7,147.8 621.3,147.3M540,154 552.3,158.9 567.1,156.4 581.9,161.4 593,160.1 611.4,151.5 621.3,147.3 638.5,150.3 655.8,144.1 659.5,142.4 673,133 687.8,126.9 702.6,118.2 717.4,110.9 732.2,101 742,96.1 756.8,87.5 771.6,81.3 786.4,78.8 798.7,73.9 806.1,71.4M593,160.1 584.3,172.4 574.5,184.8 563.4,200M659.5,142.4 666.9,150.3 671.8,155.2 674.3,165.1 682.9,172.4 686.6,182.3 692.7,188.5 702.6,190.9 714.9,189.7 727.2,186.7 742,183.5 756.8,181.1 771.6,176.1 786.4,174.4 798.7,172.4 806.1,175.4M714.9,189.7 721.1,200M5.9,257.2 37,255.4 61.6,251.7 86.2,243.1 110.9,234.5 128.1,226.6 147.8,223.9 160.1,225.4M160.1,225.4 150.3,222.2 145.3,212.3 145.3,203.7 150.3,200M160.1,225.4 163.8,222.2 172.4,221.7 175.4,225.9 173.7,230.8 165.1,231.5 160.1,229.6M172.4,224.6 187.2,218.5 202,209.9 216.8,200M163.8,231.5 166.3,249.3 168.8,266.5 172.4,283.8 171.2,308.4 174.9,328.1 177.4,347.8 182.3,367.5 183.5,382.3 181.1,394.6 177.4,400M398.1,200 398.6,224.6 398.1,238.7 394.4,256.7 396.1,276.4 396.9,298.5 399.3,318.2 400.6,338 403,352.7 404.3,367.5 405.5,379.8M405.5,379.8 415.3,365.1 420.3,352.7 437.5,342.9 452.3,333 459.7,320.7 469.5,305.9 481.9,286.2 491.7,271.4 497.9,256.7 501.6,244.3 510.2,238.2M415.3,365.1 432.6,362.6 452.3,363.8 467.1,365.1 484.3,361.4 506.5,357.7 523.7,355.2 540,351.5M405.5,379.8 393.2,389.7 380.9,397.1 363.6,400M405.5,379.8 404.3,400M393.2,400 398.1,387.2 405.5,379.8M415.3,365.1 411.7,377.4 405.5,383.5 388.2,387.2M460.9,200 472,212.3 479.4,224.6 486.8,233.3 501.6,239.4 510.2,238.2 521.3,238.2 528.7,246.8 537.3,253 538.5,266.5 540,271.4M510.2,238.2 523.7,232 536.1,224.6 540,223.4M540,272.7 543.7,283.8 544.9,293.6 552.3,302.2 557.2,310.9 558.5,318.2 569.6,323.2 573.3,330.6 579.4,338 581.9,347.8M584.3,293.6 578.2,303.5 574.5,313.3 570.8,323.2M581.9,347.8 593,336.7 604.1,325.6 621.3,318.2 638.5,308.4 650.9,301 663.2,294.8 678,286.2 687.8,282.5 700.1,278.8 712.4,272.7 722.3,266.5 727.2,257.9 737.1,254.2 744.5,249.3 756.8,241.9 771.6,234.5 786.4,228.3 798.7,224.6 806.1,222.7M581.9,355.2 604.1,354 621.3,360.1 638.5,363.8 658.2,367.5 678,370 700.1,371.2 719.8,372.4 737.1,372.4 751.9,373.7 761.7,370 776.5,360.1 788.8,355.2 798.7,347.8 806.1,339.2M540,352.7 554.8,349 574.5,347.8 581.9,355.2M577,338 586.8,334.3 593,338 594.2,350.3 589.3,360.1 580.6,362.6 575.7,355.2 575.7,345.3 577,338M581.9,347.8 581.9,355.2 586.8,362.6 594.2,372.4 599.1,384.8 604.1,400M581.9,355.2 577,362.6 567.1,367.5 559.7,377.4 552.3,392.2 549.9,400M719.8,200 729.7,212.3 737.1,217.2 749.4,222.2 756.8,232 759.3,241.9 764.2,256.7 767.9,271.4 770.3,280.1M739.5,255.4 742,261.6 754.3,271.4 770.3,280.1 781.4,288.7 791.3,298.5 798.7,304.7 806.1,308.4M540,225.9 547.4,217.2 554.8,207.4 560.9,200M5.9,460.4 24.6,462.8 49.3,465.3 73.9,469 86.2,473.9 98.5,475.1 110.9,473.9 135.5,472.7 145.3,476.4 152.7,480.1M152.7,480.1 172.4,478.8 197.1,476.4 221.7,475.1 246.4,473.9 258.7,473.4 270,471.4M177.4,400 172.4,412.3 163.8,424.6 161.4,439.4 157.7,456.7 154,471.4 147.8,478.8 152.7,480.1 145.3,493.6 138,508.4 134.3,523.2 130.6,542.9 129.3,567.5 128.1,600M258.7,473.4 251.3,488.7 243.9,505.9 236.5,518.2 235.3,528.1 226.6,538 216.8,550.3 214.3,567.5 214.3,582.3 209.4,594.6 206.9,600M147.8,478.8 147.8,471.4 154,471.4M270,470.2 284.8,462.8 297.1,451.7 314.3,434.5 329.1,417.2 341.4,404.9 351.3,401.2 363.6,400M405.5,400 409.2,412.3 417.8,427.1 425.2,441.9 431.4,459.1 440,471.4M440,471.4 459.7,472.7 474.5,466.5 491.7,460.4 509,449.3 518.8,439.4 526.2,427.1 533.6,417.2 540,412.3M440,471.4 433.8,483.8 427.7,498.5 420.3,513.3 410.4,528.1 400.6,542.9 385.8,560.1 368.5,574.9 351.3,587.2 334.1,597.1 319.3,600M609,400 613.9,408.6 623.8,416 628.7,422.2 634.8,425.9 638.5,430.8M628.7,422.2 632.4,429.6 633.6,437 631.1,449.3 629.9,473.9 629.9,498.5 633.6,518.2 641,533 647.2,545.3 650.9,562.6 654.6,582.3 658.2,600M638.5,430.8 645.9,440.6 655.8,449.3 673,456.7 687.8,461.6 707.5,465.3 727.2,467.7 744.5,471.4 759.3,472.7 776.5,480.1 796.2,486.2 806.1,493.6M634.8,425.9 637.3,433.3 633.6,437M806.1,535.5 802.4,547.8 798.7,567.5 791.3,582.3 786.4,594.6 786.4,600M540,411.1 546.2,404.9 547.4,400M5.9,661.4 19.7,659 37,652.8 54.2,646.7 73.9,643 98.5,641.7 123.2,640.5 147.8,640.5 167.5,647.9 184.8,655.3 197.1,656.5 211.9,651.6 231.6,646.7 246.4,643 270,641.7M128.1,590 126.1,604.8 126.9,627 130.6,641.7 135.5,651.6 134.3,663.9 133,675M73.9,643 83.8,645.4 93.6,659 105.9,668.8 118.2,672.5 133,675 147.8,682.4 160.1,684.8 172.4,676.2 182.3,666.4 184.8,655.3M209.4,590 204.5,604.8 197.1,622 189.7,639.3 184.8,655.3M5.9,617.1 12.3,627 11.1,644.2 14.8,660.2M270,644.2 284.8,639.3 302,631.9 307,622 314.3,622 331.6,625.7 348.8,630.6 361.1,634.3 368.5,638 378.4,638 385.8,634.3 393.2,627 408,620.8 427.7,618.3 442.4,615.9 454.8,620.8 467.1,619.6 479.4,614.6 496.6,617.1 516.4,615.9 528.7,620.8 540,627M343.9,590 331.6,596.2 316.8,601.1 308.2,609.7 307,622M657,590 660.7,604.8 668.1,619.6 678,631.9 690.3,643 700.1,654.1 707.5,661.4 713.7,673.8 719.8,691 723.5,703.3 732.2,715.6 739.5,728 744.5,740.3 748.2,757.5 749.4,772.3 754.3,784.6 755.6,790M540,626.5 554.8,629.4 567.1,635.6 581.9,640.5 601.6,640.5 623.8,641.7 643.5,645.4 663.2,649.1 680.4,652.8 700.1,656.5 707.5,661.4 727.2,661.4 742,661.9 756.8,659 771.6,656 783.9,654.5M786.4,590 783.9,604.8 785.1,622 786.4,639.3 783.9,654.5 791.3,663.9 798.7,676.2 804.8,691 806.1,695.9M783.9,643 779,649.1 779,661.4 785.1,666.4 793.7,663.9" fill="none" stroke="#86710f" stroke-width="0.99" shape-rendering="crispEdges"/><path d="M5.9,105.2 155.2,105.2 156.4,112.1 161.4,114.6 160.1,123.2 152.7,130.6 145.3,139.2 137.5,149.3 187.2,149.3M202,6.2 204.5,14.8 208.9,24.6 206.9,29.6 202,32 203.2,37 209.4,43.1 212.4,53 216.8,59.1 221.7,58.6 225.4,55.4M270,53 268.6,51.6 267.9,51 266,50.6 263.5,50.8 262.5,51.3 262.6,50.9 261.3,48 260,45.2 260.2,44.4 259.4,45 256.1,45.6 254.5,45.7 254,45.2 252.8,43.3 252.2,42.4 250.8,42.5 248.6,42.6 247.8,42.3 246.3,40.4 245.2,38.9 244.5,38.8 242.4,40 241.8,40.7 241.2,41 237.5,40.2 235.3,39.5 235.1,39.9 234,42.5 233.2,46.1 233.5,47.1 232.6,47 229.2,48.1 226.5,48.9 226.2,48.6 226.1,51 226.5,55 227.5,54.6 226.9,56.2 227.4,59.8 226.9,60.6 228.4,60.4 231.9,61.8 232.8,62.1 231.9,63.6 230.2,67 229.5,67.3 230.9,68.2 232.5,71.2 232.8,72.4 232.1,72.6 229.3,73.5 226.9,74.2 226,75.6 227.8,78 231.2,79.8 232.4,81.5 230.9,82.9 227.3,83.3 224.7,84.7 225,85.2 226.7,88.2 228,89.6 227.1,90.2 224.4,92.8 223.6,92.7 224.1,95.1 223.7,99.1 223,100 220.1,98.6 218.5,96.2 218.4,96.7 215.5,95.9 213.5,94.8 215.1,94.9 213,94.5 210.2,96.1 210.2,96.2 210.6,98.4 211.3,100.9 211.4,101.1 209.8,102.3 207.6,104.1 207,104.7 207.1,105.6 205.2,107.9 202.8,108.5 202,107.7 202.3,106 203.7,103.1 205.7,101.5 206.5,100.8 206,99 203.2,97.8 201.1,99 201.7,99.4 200.8,98.6 196.4,99.4 194.3,101 195.2,102.4 198.9,104.4 202,105.3 201.9,104.9 201.8,107.6 200.2,110.8 199,110.7 200.2,111.3 201.3,115.1 200.7,117.1 198.8,117.4 194.9,116.9 192.9,117.9 194.2,119.7 197.9,121.6 198.7,123.9 195.9,124.9 192.6,124.3 191.6,124 191,125.6 189.9,128.2 189.4,128.3 188,129.4 187.9,131.3 189.8,132 192.2,131.8 193.4,131.9 194.6,134.2 193.2,136.4 193,137.1 192.8,139.6 192.6,140.7 191.1,141.6 188.6,142.8 188.2,143 188.5,145.3 188.9,148.1 189.3,148 187.4,149.1 187.1,151.8 187.1,152.3 189.6,152.6 192.6,153.2 193.9,155.2 190.5,156.3 187.8,155.6 186.4,155.3 184.2,156.4 185,159.1 187.9,160.8 188.9,162.7 187.6,164.4 185.4,165.2 183.3,165.5 182.7,165.4 182.5,166.3 180.6,168.2 178.9,170.2 178.7,170.3 177,169.2 174.3,168 173.4,167.7 172.5,168.7 171,172.3 171.6,174 171.1,173.7 170.9,175.8 171.6,178.2 172,178.7 174.6,178.2 177.4,180.2 175.6,181.8 172.5,181.9 171.3,181.9 170.9,183.7 171.1,185.3 171.1,185.6 171.9,189 171.4,188.9 171.3,189.6 169.5,191.4 169.2,191.5 167,190 165.5,188.8 164.7,189.6 162.4,191.8 162.6,192.9 161.1,192.8 158.6,193.8 158.3,194.3 157.7,197.1 156.8,198.8 156,199.4 155.2,200M209.4,104.9 270,104.7M304.5,6.2 309.4,11.1 308.2,17.2 297.1,19.7 284.8,22.2 278.6,25.9 279.9,32 276.2,37 282.3,44.3 281.1,51.7 274.9,54.2 270,52.2M270,105.2 310.6,105.2 312.4,98.5 309.9,89.2 325.4,91.6 420.3,90.7 462.2,93.1 540,94.4M540,94.4 572,96.1 636.1,97.3 663.2,95.6 742,96.1 786.4,94.4 806.1,98M636.1,96.1 650.9,88.7 668.1,85 676.7,82.5 680.4,75.1 692.7,71.4 697.7,66.5 698.9,60.4 707.5,55.4 708.8,49.3 722.3,41.9 742,33.3 754.3,23.4 761.7,16 764.2,12.3 759.3,11.1 751.9,9.9 749.4,6.2M764.2,12.3 765.4,23.4 771.6,30.8 780.2,37 786.4,41.9 796.2,39.4 806.1,34.5M786.4,94.4 783.9,101 783.9,108.4 781.4,115.8 782.7,119.5 776.5,118.2 767.9,123.2 762.9,131.8 758,138.4 751.9,139.2 746.9,135.5 737.1,138 729.7,142.9 723.5,151.5 718.6,153.2 714.9,149 716.1,145.3 712.4,143.6 707.5,146.6 702.6,152.7 696.4,154 692.7,160.1 690.3,167.5 685.3,170 678,168.8 668.1,173.7 658.2,179.8 648.4,188.5 638.5,187.2 623.8,190.9 613.9,198.3M162.6,200 161.2,200 160.3,200.1 158.6,201.5 157.1,203.7 157.5,204.2 157.1,203.6 157.5,206.8 157.9,210 157.1,210.4 158.3,208.6 159.3,211.7 158.7,213.2 158.1,213.2 156,215.1 156.8,217.3 158.4,217.9 160.7,218.7 161.1,219.1 161.2,221.1 160.7,222.9 160.9,224 160.1,226.5 158.2,227.3 157.4,227.5 154.2,225.5 152.6,224.6 151.7,225 151.4,228.8 152.9,231.9 153.7,232.8 152.7,233 149.9,234.5 147.2,233.9 147.3,233.5 146.7,235.2 144.7,238.5 144.7,239.5 143.4,239 142.4,242.8 142.3,244.3 144.5,244.7 148.8,245.2 150,247.1 147.5,248.6 143.8,248.8 143.1,248.4 143,250.1 141.4,253 139.9,254.7 138.2,254.5 135.4,252.6 135.8,250.1 135.8,249.2 133.7,247.8 131.4,249.6 131.7,250.5 130.8,249.9 129.2,253.2 128.4,255.3 128.8,254.9 131,258.5 130,261.1 129,260.5 125.5,259.9 123.6,261.4 126.2,263.6 129.7,264.1 130.3,264.1 130.5,267.8 127.8,268.7 128.3,268.5 127.4,271.3 124.6,272.8 123.6,271.2 124.1,268.5 124.8,266.3 121.7,265.8 123.4,268.8 125.2,270.6 125.5,270.8 124.5,272.6 123.1,275.4 122.9,275.6 123,276.8 121.8,280.2 122.5,282.4 123.2,282 122.4,283.3 121.6,286.2 120.9,288.4 120.6,288.3 121.6,288.9 123.4,291.6 122.8,294 122.6,294.7 121,294.3 117,293 115.6,292 115.3,292.6 114.9,296.7 115.7,299.9 113.7,301.2 111.7,298.2 111.4,294.4 111.6,293.4 108.7,293.2 108.3,297.7 109,298.6 108.1,299.3 105.5,301.2 104.6,301.1 104.8,301.9 103.2,304.8 102.5,305.8 101.1,305 97.4,306.4 98.2,308.8 100.2,309.1 103.6,309.9 104.4,311.9 101.8,313.4 99.9,313.2 99.1,313.9 97.8,316.3 98.8,316.6 99.2,318.1 99.6,319.7 100.5,320.2 99.4,323 98.5,324 96.6,324.1 93.8,323.9 93.3,323.9 92.2,326 90.6,328.5 90.3,328.9 88.1,328.2 84.7,329.8 85.8,331.7 88.3,331.9 91.3,332.1 92.8,333.6 90.3,335.5 87.9,335.3 86.7,335.3 85.4,336.9 86,340.3 87.5,342.2 88.1,342.7 87.8,343.2 87.4,345.4 89.4,348 90,348.5 90.8,347.9 92.4,348.1 90.3,349.7 90,349.8 88.4,348.5 86,346.9 85.7,346.3 84.9,347.1 82.5,349.4 82.6,350.4 82.9,348.9 82.3,351.4 82.6,354 82.5,354.3 85,354.4 87.5,356.8 85.5,357.3 83.4,355.6 82.9,354.8 81.2,355.5 79.1,356.4 78.5,356.2 75.8,354.8 74.6,355.2 74.5,356.8 75.1,359.4 75,359.6 73.5,361.5 72.7,363.5 74,363.8 77,363.9 77.8,363.4 78.3,364.8 79.4,367.1 79.1,367.3 81.3,367.6 81.1,370 80.5,370.3 78.1,370.9 75.5,371.2 74.3,371.4 74.1,372.4 73.8,374.8 76.3,374.7 76.8,374.2 77,374.6 78.8,376.1 80.9,377.8 81.8,378.8 82.4,378.3 86,378.8 88.5,380.5 87.8,382 84.2,382.9 83.1,382.1 83.1,383.6 81.8,387.2 82.3,387.2 81.1,388.2 81.8,391.5 81.4,391.3 84.2,391.2 86.9,392.1 87,392.8 86.3,394.2 85.7,396.6 85.7,398.1 86.2,400M142.9,238.4 270,238.4M270,238.4 299.6,237.7 398.1,238.7 444.9,238.9 492.9,239.4 540,238.9M299.6,237.7 302,243.1 307.4,248 305.7,273.9 300.8,310.9 297.1,347.8 293.4,377.4 291.7,400M492.9,239.4 496.6,261.6 502.8,293.6 507.7,323.2 512.7,352.7 516.4,377.4 520,400M611.4,200 610.2,209.9 604.1,214.8 593,216 590.5,222.2 588,238.9M540,238.9 588,238.9 658.2,238.9 679.2,238.2M679.2,238.2 692.7,233.3 710,229.6 727.2,222.2 732.2,219.7 744.5,220.4 771.6,221.7 806.1,222.9M679.2,238.2 673,248 663.2,256.7 660.2,263.6 668.1,270.2 678,278.8 685.3,283.8 695.2,283.8 700.1,293.6 706.3,305.9 707.5,313.3 712.4,320.7 719.8,331.8 732.2,340.4 742,347.8 745.7,357.7 753.1,363.8 759.3,367.5 765.4,374.9 765.4,382.3 771.6,389.7 779,398.3M5.9,415.3 78.8,415.3M85,400 82.7,400.8 81.6,401.4 80.3,403 80.2,405.4 81.1,404.4 80.8,404.7 81.4,407.9 81.8,411 80.7,411.1 82.1,409.7 82.8,412.7 82.2,414.7 81.2,415.2 78.8,415.9 77.5,416.3 77.2,418 77.1,420.1 77.7,420.1 77.9,422.2 78.6,423.6 79.5,423.6 81.7,423.6 82.5,423.3 82.5,424 86.4,422.6 88.2,421.3 88.1,421 86.5,418 86.6,421.3 87.2,422.1 86.5,421.8 83.6,423.2 81.1,424.2 80.9,423.9 81.7,425.6 82.7,429.4 83.4,430.1 81.9,430.9 78.9,433.5 78,434 79.1,435.5 81.4,438.6 82.2,438.8 81,439.8 79.8,443.1 79.1,443.6 80.9,444.1 83.7,445.6 84.9,445.7 84.7,446.4 85,449.6 86.3,451.6 86.6,451.9 88.3,450.6 91,448.9 93.1,449.9 92,451.6 89.2,452.5 87.1,452.5 87.5,452.7 87.2,455.9 87.5,457.9 86.3,457.7 83.4,459.7 82.3,460.2 83.7,461.6 85.9,463.9 85.4,463.4 87,465.1 89.6,466 89.2,465.6 91.3,463.7 93.5,462.8 93.9,463.6 93.9,466.1 93.7,468.3 93.8,468.5 96,469.7 98.4,471 98.9,471.3 98.5,473.5 100.9,473.8 101.5,472.5 99.2,470.1 99.4,473.8 100,476.2 100,476.8 98.5,477.4 95.5,478.8 92.9,479.2 92.3,479.2 92.4,480.3 91.4,483.1 90.6,485.4 90.3,486 88.8,485.9 85,484.3 84,482.9 84.4,483.5 81.7,485.9 80.8,488.7 82.3,487.5 79.8,488.3 77.2,491.2 76.4,492.2 78.5,494.2 82.2,492.2 82.9,491.4 83.6,491.9 86.8,492.7 87.8,493.3 88.2,492.3 91,491.4 90.8,493.6 89.3,493.9 86.4,494.6 85.6,494.5 85.7,496.4 85.8,499.7 85.7,499.7 84.5,501.1 83.6,502.5 84,503.2 84.1,506.5 83.5,507.4 81.7,507.7 79.6,507.7 78.9,508.4 77.6,510.6 77.1,511.4 75.6,512.1 73,513.2 72.6,513.4 73,515.8 73,518.6 72.9,519.2 70.6,518.9 68.1,518.2 68.2,517.8 66.9,519.5 66.1,522.1 66.6,522.3 65.4,523.8 64.8,526.2 65.9,528.4 68.3,528.1 70.2,526.4 71.9,524.6 74.1,526.4 72.5,526.9 70.2,526.7 67.8,526.4 66.9,526.4 66.2,527.3 64.9,529.5 64.2,531.6 64.6,531.2 62.9,531.6 60.7,533.7 60.1,534.4 61.2,535 61.8,538.8 60.5,540.2 60.1,540.1 57.6,538.6 55.1,537.2 52.8,537.9 54.8,540.8 57,541.3 57.1,542 56.9,544.9 56.6,545.4 57.6,546.6 58.8,548.8 58.3,549.5 56.1,551.5 55,551.9 55.4,553.6 54.4,556 54.1,556.4 51.2,555.7 49.2,555.2 47.6,556.7 48.4,560.4 49.4,560.5 48.5,561.7 49.2,565.1 50.8,565.1 52.9,562.6 55.6,562 55.6,564 54.4,566.2 52.7,568.1 51.9,568 52.9,568.4 51.6,569.9 49.3,571.2 48.4,571.7 48.1,571.2 46.7,569.5 43,569.7 42.9,571.9 43.4,572.1 45.9,573.7 48.1,574.2 47.5,574.7 46.7,578.4 45.8,579.5 47.2,579.5 50.4,581.4 51.4,582.7 48.4,583.6 46,581.4 46,581.1 44.4,583.6 47.4,583.7 47.6,583.1 47.1,584.3 48,587.7 47.8,589.8 47.7,589.4 50,589.1 49.2,592.2 48,593.1 46.7,593.3 44.3,594.1M44.3,594.1 186,594.1 184.8,597.1 186.7,600M291.7,400 287.2,437 282.3,486.2 279.9,523.2 281.1,560.1 282.8,600M343.9,600 343.9,595.4 540,594.6M777.7,400 782.7,404.9 791.3,408.6 797.4,414.8 798.7,422.2 802.4,429.6 804.8,437 806.1,441.9M53,590 44.3,594.4 186.5,594.4 183.5,604.8 177.4,617.1 178.6,627 187.2,639.3 190.9,649.1 192.2,659 195.8,666.4M282.8,590 285.3,647.9M343.9,594.4 537.3,594.4 538.5,590M343.9,594.4 341.4,604.8 348.8,614.6 357.5,622 358.7,629.4 356.2,636.8 357.5,643 362.4,643M537.3,594.4 540,597.4M547.4,620.1 613.9,623.3 668.1,627 712.4,630.2 744.5,632.4 745.7,641.7 748.2,650.4 756.8,651.1 758.8,639.3 758,627 758,615.9 764.2,609.7 774,612.7 786.4,615.9M520,400 519.7,401.4 519.7,402.4 520.6,404 522.1,405.9 523.2,406.4 522.8,406.7 521.2,409.5 519.6,412.1 518.9,412.4 519.8,412.6 522.2,414.9 523.2,416.3 523,416.9 522.2,419 521.9,419.9 522.8,420.8 524.1,422.4 524.3,422.9 523.6,424.8 523.2,426.2 523.8,426.8 525.4,428.5 525.9,429 526.3,429.5 525.2,432.9 524.3,434.6 524.4,434.4 526.7,435.6 529.6,437.6 530.7,437.8 530.1,438.5 529,441.9 527.9,444.7 527.5,444.5 529,445.2 532.5,448.1 533.8,448.5 533.6,450.4 533.6,454.7 533.4,456.2 535,456.3 538.2,457.8 539,457.6 538.1,459 537.2,462.5 536.5,462.9 538.1,463.4 540.7,465.5 541.8,466.3 541.4,467 539.2,469.2 537.2,470.5 537.1,470.5 537.5,472.7 539,475.9 540.3,475.3 539.9,475.9 541.4,478.5 542.7,480.7 542.8,480.4 546,481.2 547.2,483 545.7,483.5 541.6,483.7 540.1,483.6 539.1,486.1 538.4,489.3 538.7,489.2 535.4,489.9 532.4,491.3 532.4,492.2 533.5,495.7 534.7,498.2 534.5,498.2 533.2,500.3 531.7,502.3 531.7,502.5 532.9,504.3 534.1,506.5 534.3,506.6 532.7,508 530.7,509.9 530.2,510.3 530.6,511.3 532.1,514.1 533.5,515.8 533.9,515.8 533,516.9 531.6,519.8 530.6,522.1 530.3,522.5 531.4,523.3 533.5,525.5 535.3,527.2 535.8,527.6 534.8,528.8 532.3,532.3 530.7,533.2 531.3,533.3 533.6,536.3 535.6,538.3 535.8,537.9 534.1,540 532.2,543.4 531.4,543.6 532.7,544 535.3,547.3 535.7,548.3 534.9,548.9 532.4,551 531.2,551.6 531.8,552.9 532.9,556 533.6,557.1 532.4,558.3 530.4,560.6 529.7,560.9 530.8,562 532.3,564.6 532,564.8 530.9,566.3 529.9,567.6 530.1,568.4 530.9,570.6 531.2,571.3 530.1,572.7 529,574.1 529.3,575.3 530.4,577.6 531.3,578.3 531.1,580.1 531.2,582.9 531.1,583.2 533.2,583.9 535.9,585.2 536.2,585.5 535.3,587.6 534.2,590.1 534,590.3 535.9,591.5 537.8,593 537.9,593.4 537.7,595.3 538.1,597 538.7,598 539.9,599.6" fill="none" stroke="#000" stroke-width="0.99" shape-rendering="crispEdges"/><path d="M363,254.5h3M449,254.5h3M318,539.5h2M495,539.5h2M305,529.5h1M509,529.5h1M366,253.5h4M445,253.5h4M328,545.5h1M486,545.5h1M321,541.5h2M492,541.5h2M395,566.5h25M379,564.5h7M429,564.5h7M301,526.5h2M512,526.5h2M346,260.5h2M467,260.5h2M315,537.5h2M498,537.5h2M303,527.5h1M511,527.5h1M314,536.5h1M500,536.5h1M295,294.5h1M519,294.5h1M386,565.5h9M420,565.5h9M386,249.5h9M420,249.5h9M304,528.5h1M510,528.5h1M317,276.5h1M497,276.5h1M351,556.5h2M462,556.5h2M374,251.5h5M436,251.5h5M309,532.5h1M505,532.5h1M379,250.5h7M429,250.5h7M366,561.5h4M445,561.5h4M363,560.5h3M449,560.5h3M331,547.5h2M482,547.5h2M333,266.5h2M480,266.5h2M341,262.5h2M472,262.5h2M356,256.5h3M456,256.5h3M418,248.5h2M370,252.5h4M441,252.5h4M356,558.5h3M456,558.5h3M374,563.5h5M436,563.5h5M353,257.5h3M459,257.5h3M299,524.5h1M515,524.5h1M310,533.5h1M504,533.5h1M351,258.5h2M462,258.5h2M324,271.5h2M489,271.5h2M321,273.5h2M492,273.5h2M311,534.5h2M502,534.5h2M343,553.5h3M469,553.5h3M329,268.5h2M484,268.5h2M359,255.5h4M452,255.5h4M296,293.5h1M518,293.5h1M306,284.5h1M508,284.5h1M307,283.5h2M506,283.5h2M339,551.5h2M474,551.5h2M310,281.5h1M504,281.5h1M326,544.5h2M487,544.5h2M343,261.5h3M469,261.5h3M339,263.5h2M474,263.5h2M348,259.5h3M464,259.5h3M335,549.5h2M478,549.5h2M329,546.5h2M484,546.5h2M337,264.5h2M476,264.5h2M348,555.5h3M464,555.5h3M324,543.5h2M489,543.5h2M353,557.5h3M459,557.5h3M370,562.5h4M441,562.5h4M306,530.5h1M508,530.5h1M333,548.5h2M480,548.5h2M335,265.5h2M478,265.5h2M311,280.5h2M502,280.5h2M346,554.5h2M467,554.5h2M297,292.5h1M517,292.5h1M315,277.5h2M498,277.5h2M337,550.5h2M476,550.5h2M331,267.5h2M482,267.5h2M320,540.5h1M494,540.5h1M301,288.5h2M512,288.5h2M359,559.5h4M452,559.5h4M320,274.5h1M494,274.5h1M300,289.5h1M514,289.5h1M318,275.5h2M495,275.5h2M307,531.5h2M506,531.5h2M341,552.5h2M472,552.5h2M328,269.5h1M486,269.5h1M300,525.5h1M514,525.5h1M323,542.5h1M491,542.5h1M326,270.5h2M487,270.5h2M305,285.5h1M509,285.5h1M323,272.5h1M491,272.5h1M297,522.5h1M517,522.5h1M299,290.5h1M515,290.5h1M314,278.5h1M500,278.5h1M303,287.5h1M511,287.5h1M309,282.5h1M505,282.5h1M298,291.5h1M516,291.5h1M295,520.5h1M519,520.5h1M296,521.5h1M518,521.5h1M317,538.5h1M497,538.5h1M313,535.5h1M501,535.5h1M304,286.5h1M510,286.5h1M298,523.5h1M516,523.5h1M313,279.5h1M501,279.5h1M267.5,331v2M267.5,482v2M565.5,386v9M565.5,420v9M566.5,395v25M559.5,359v4M559.5,452v4M549.5,335v2M549.5,478v2M552.5,341v2M552.5,472v2M256.5,356v3M256.5,456v3M533.5,310v1M533.5,504v1M250.5,379v7M250.5,429v7M563.5,374v5M563.5,436v5M557.5,353v3M557.5,459v3M528.5,304v1M528.5,510v1M255.5,359v4M255.5,452v4M257.5,353v3M257.5,459v3M527.5,303v1M527.5,511v1M264.5,337v2M264.5,476v2M253.5,366v4M253.5,445v4M560.5,363v3M560.5,449v3M271.5,324v2M271.5,489v2M562.5,370v4M562.5,441v4M534.5,311v2M534.5,502v2M251.5,374v5M251.5,436v5M537.5,315v2M537.5,498v2M536.5,314v1M536.5,500v1M558.5,356v3M558.5,456v3M249.5,386v9M249.5,420v9M285.5,305v1M285.5,509v1M538.5,317v1M538.5,497v1M520.5,295v1M520.5,519v1M276.5,317v1M276.5,497v1M279.5,313v1M279.5,501v1M292.5,297v1M292.5,517v1M252.5,370v4M252.5,441v4M259.5,348v3M259.5,464v3M551.5,339v2M551.5,474v2M526.5,301v2M526.5,512v2M564.5,379v7M564.5,429v7M287.5,303v1M287.5,511v1M254.5,363v3M254.5,449v3M270.5,326v2M270.5,487v2M548.5,333v2M548.5,480v2M258.5,351v2M258.5,462v2M547.5,331v2M547.5,482v2M541.5,321v2M541.5,492v2M282.5,309v1M282.5,505v1M284.5,306v1M284.5,508v1M544.5,326v2M544.5,487v2M539.5,318v2M539.5,495v2M531.5,307v2M531.5,506v2M266.5,333v2M266.5,480v2M543.5,324v2M543.5,489v2M561.5,366v4M561.5,445v4M290.5,299v1M290.5,515v1M525.5,300v1M525.5,514v1M248.5,395v25M273.5,321v2M273.5,492v2M275.5,318v2M275.5,495v2M269.5,328v1M269.5,486v1M277.5,315v2M277.5,498v2M540.5,320v1M540.5,494v1M555.5,348v3M555.5,464v3M265.5,335v2M265.5,478v2M294.5,295v1M294.5,519v1M550.5,337v2M550.5,476v2M530.5,306v1M530.5,508v1M542.5,323v1M542.5,491v1M546.5,329v2M546.5,484v2M268.5,329v2M268.5,484v2M272.5,323v1M272.5,491v1M529.5,305v1M529.5,509v1M278.5,314v1M278.5,500v1M281.5,310v1M281.5,504v1M286.5,304v1M286.5,510v1M521.5,296v1M521.5,518v1M289.5,300v1M289.5,514v1M522.5,297v1M522.5,517v1M261.5,343v3M261.5,469v3M545.5,328v1M545.5,486v1M556.5,351v2M556.5,462v2M274.5,320v1M274.5,494v1M553.5,343v3M553.5,469v3M532.5,309v1M532.5,505v1M263.5,339v2M263.5,474v2M524.5,299v1M524.5,515v1M288.5,301v2M288.5,512v2M280.5,311v2M280.5,502v2M523.5,298v1M523.5,516v1M262.5,341v2M262.5,472v2M291.5,298v1M291.5,516v1M283.5,307v2M283.5,506v2M535.5,313v1M535.5,501v1M554.5,346v2M554.5,467v2M293.5,296v1M293.5,518v1M260.5,346v2M260.5,467v2M289,660.5h2M524,660.5h2M281,656.5h2M532,656.5h2M363,131.5h7M445,131.5h7M352,681.5h6M457,681.5h6M289,154.5h2M524,154.5h2M298,150.5h2M515,150.5h2M322,141.5h3M490,141.5h3M305,147.5h3M507,147.5h3M358,132.5h5M452,132.5h5M291,153.5h2M522,153.5h2M328,675.5h4M483,675.5h4M379,129.5h12M424,129.5h12M216,610.5h1M598,610.5h1M358,682.5h5M452,682.5h5M370,684.5h9M436,684.5h9M391,686.5h33M298,664.5h2M515,664.5h2M291,661.5h2M522,661.5h2M348,134.5h4M463,134.5h4M283,657.5h2M530,657.5h2M332,676.5h3M480,676.5h3M268,649.5h2M545,649.5h2M343,679.5h5M467,679.5h5M218,612.5h1M596,612.5h1M379,685.5h12M424,685.5h12M283,157.5h2M530,157.5h2M279,159.5h2M534,159.5h2M249,637.5h1M565,637.5h1M303,666.5h2M510,666.5h2M279,655.5h2M534,655.5h2M370,130.5h9M436,130.5h9M239,184.5h2M574,184.5h2M238,629.5h1M576,629.5h1M313,670.5h3M499,670.5h3M322,673.5h3M490,673.5h3M261,645.5h2M552,645.5h2M325,674.5h3M487,674.5h3M264,647.5h2M549,647.5h2M235,187.5h2M578,187.5h2M391,128.5h4M418,128.5h6M293,662.5h2M520,662.5h2M277,160.5h2M536,160.5h2M348,680.5h4M463,680.5h4M300,149.5h3M512,149.5h3M352,133.5h6M457,133.5h6M271,163.5h2M542,163.5h2M234,626.5h1M580,626.5h1M310,669.5h3M502,669.5h3M212,607.5h1M602,607.5h1M335,677.5h4M476,677.5h4M216,204.5h1M598,204.5h1M328,139.5h4M483,139.5h4M343,135.5h5M467,135.5h5M363,683.5h7M445,683.5h7M335,137.5h4M476,137.5h4M273,162.5h2M540,162.5h2M273,652.5h2M540,652.5h2M255,641.5h1M559,641.5h1M275,653.5h2M538,653.5h2M339,678.5h4M472,678.5h4M223,197.5h1M591,197.5h1M232,624.5h1M582,624.5h1M229,622.5h1M585,622.5h1M230,623.5h2M583,623.5h2M219,613.5h1M595,613.5h1M287,155.5h2M526,155.5h2M319,142.5h3M493,142.5h3M212,207.5h1M602,207.5h1M319,672.5h3M493,672.5h3M230,191.5h2M583,191.5h2M253,174.5h2M560,174.5h2M308,146.5h2M505,146.5h2M224,618.5h2M589,618.5h2M238,185.5h1M576,185.5h1M310,145.5h3M502,145.5h3M210,605.5h1M604,605.5h1M303,148.5h2M510,148.5h2M250,638.5h2M563,638.5h2M295,151.5h3M517,151.5h3M213,608.5h2M600,608.5h2M210,209.5h1M604,209.5h1M259,170.5h2M554,170.5h2M332,138.5h3M480,138.5h3M287,659.5h2M526,659.5h2M246,635.5h1M568,635.5h1M233,625.5h1M581,625.5h1M213,206.5h2M600,206.5h2M266,648.5h2M547,648.5h2M270,164.5h1M544,164.5h1M241,631.5h1M573,631.5h1M259,644.5h2M554,644.5h2M258,643.5h1M556,643.5h1M242,632.5h1M572,632.5h1M215,205.5h1M599,205.5h1M263,168.5h1M551,168.5h1M250,176.5h2M563,176.5h2M227,620.5h1M587,620.5h1M222,198.5h1M592,198.5h1M235,627.5h2M578,627.5h2M226,619.5h1M588,619.5h1M237,628.5h1M577,628.5h1M249,177.5h1M565,177.5h1M247,636.5h2M566,636.5h2M275,161.5h2M538,161.5h2M285,658.5h2M528,658.5h2M277,654.5h2M536,654.5h2M221,615.5h1M593,615.5h1M243,633.5h2M570,633.5h2M316,671.5h3M496,671.5h3M237,186.5h1M577,186.5h1M239,630.5h2M574,630.5h2M305,667.5h3M507,667.5h3M339,136.5h4M472,136.5h4M245,180.5h1M569,180.5h1M228,621.5h1M586,621.5h1M258,171.5h1M556,171.5h1M243,181.5h2M570,181.5h2M253,640.5h2M560,640.5h2M221,199.5h1M593,199.5h1M266,166.5h2M547,166.5h2M223,617.5h1M591,617.5h1M256,642.5h2M557,642.5h2M285,156.5h2M528,156.5h2M268,165.5h2M545,165.5h2M227,194.5h1M587,194.5h1M270,650.5h1M544,650.5h1M271,651.5h2M542,651.5h2M245,634.5h1M569,634.5h1M261,169.5h2M552,169.5h2M234,188.5h1M580,188.5h1M325,140.5h3M487,140.5h3M316,143.5h3M496,143.5h3M242,182.5h1M572,182.5h1M295,663.5h3M517,663.5h3M252,175.5h1M562,175.5h1M220,200.5h1M594,200.5h1M256,172.5h2M557,172.5h2M224,196.5h2M589,196.5h2M255,173.5h1M559,173.5h1M263,646.5h1M551,646.5h1M308,668.5h2M505,668.5h2M220,614.5h1M594,614.5h1M252,639.5h1M562,639.5h1M246,179.5h1M568,179.5h1M300,665.5h3M512,665.5h3M241,183.5h1M573,183.5h1M313,144.5h3M499,144.5h3M228,193.5h1M586,193.5h1M229,192.5h1M585,192.5h1M247,178.5h2M566,178.5h2M233,189.5h1M581,189.5h1M264,167.5h2M549,167.5h2M232,190.5h1M582,190.5h1M222,616.5h1M592,616.5h1M293,152.5h2M520,152.5h2M215,609.5h1M599,609.5h1M281,158.5h2M532,158.5h2M211,606.5h1M603,606.5h1M219,201.5h1M595,201.5h1M226,195.5h1M588,195.5h1M217,203.5h1M597,203.5h1M218,202.5h1M596,202.5h1M211,208.5h1M603,208.5h1M217,611.5h1M597,611.5h1M684.5,370v9M684.5,436v9M128.5,391v33M134.5,348v4M134.5,463v4M196.5,224v2M196.5,589v2M686.5,391v33M143.5,316v3M143.5,496v3M683.5,363v7M683.5,445v7M653.5,275v2M653.5,538v2M648.5,266v2M648.5,547v2M138.5,332v3M138.5,480v3M661.5,291v2M661.5,522v2M623.5,230v2M623.5,583v2M681.5,352v6M681.5,457v6M141.5,322v3M141.5,490v3M644.5,259v2M644.5,554v2M638.5,250v2M638.5,563v2M669.5,310v3M669.5,502v3M642.5,256v2M642.5,557v2M605.5,210v1M605.5,604v1M640.5,253v2M640.5,560v2M142.5,319v3M142.5,493v3M677.5,335v4M677.5,476v4M129.5,379v12M129.5,424v12M659.5,287v2M659.5,526v2M133.5,352v6M133.5,457v6M149.5,300v3M149.5,512v3M617.5,223v1M617.5,591v1M608.5,213v2M608.5,600v2M162.5,273v2M162.5,540v2M666.5,303v2M666.5,510v2M165.5,268v2M165.5,545v2M660.5,289v2M660.5,524v2M628.5,237v1M628.5,577v1M656.5,281v2M656.5,532v2M668.5,308v2M668.5,505v2M186.5,237v1M186.5,577v1M652.5,273v2M652.5,540v2M181.5,243v2M181.5,570v2M675.5,328v4M675.5,483v4M140.5,325v3M140.5,487v3M197.5,223v1M197.5,591v1M132.5,358v5M132.5,452v5M685.5,379v12M685.5,424v12M139.5,328v4M139.5,483v4M160.5,277v2M160.5,536v2M680.5,348v4M680.5,463v4M625.5,233v1M625.5,581v1M682.5,358v5M682.5,452v5M679.5,343v5M679.5,467v5M626.5,234v1M626.5,580v1M145.5,310v3M145.5,502v3M176.5,250v2M176.5,563v2M184.5,239v2M184.5,574v2M667.5,305v3M667.5,507v3M676.5,332v3M676.5,480v3M674.5,325v3M674.5,487v3M610.5,216v1M610.5,598v1M131.5,363v7M131.5,445v7M671.5,316v3M671.5,496v3M144.5,313v3M144.5,499v3M650.5,270v1M650.5,544v1M665.5,300v3M665.5,512v3M152.5,293v2M152.5,520v2M135.5,343v5M135.5,467v5M156.5,285v2M156.5,528v2M174.5,253v2M174.5,560v2M177.5,249v1M177.5,565v1M188.5,234v1M188.5,580v1M178.5,247v2M178.5,566v2M163.5,271v2M163.5,542v2M633.5,243v2M633.5,570v2M609.5,215v1M609.5,599v1M657.5,283v2M657.5,530v2M147.5,305v3M147.5,507v3M148.5,303v2M148.5,510v2M621.5,228v1M621.5,586v1M155.5,287v2M155.5,526v2M158.5,281v2M158.5,532v2M616.5,222v1M616.5,592v1M663.5,295v3M663.5,517v3M209.5,210v1M209.5,604v1M629.5,238v1M629.5,576v1M632.5,242v1M632.5,572v1M630.5,239v2M630.5,574v2M627.5,235v2M627.5,578v2M157.5,283v2M157.5,530v2M190.5,232v1M190.5,582v1M179.5,246v1M179.5,568v1M180.5,245v1M180.5,569v1M185.5,238v1M185.5,576v1M201.5,219v1M201.5,595v1M664.5,298v2M664.5,515v2M130.5,370v9M130.5,436v9M169.5,261v2M169.5,552v2M662.5,293v2M662.5,520v2M607.5,212v1M607.5,602v1M172.5,256v2M172.5,557v2M136.5,339v4M136.5,472v4M192.5,229v1M192.5,585v1M168.5,263v1M168.5,551v1M151.5,295v3M151.5,517v3M654.5,277v2M654.5,536v2M164.5,270v1M164.5,544v1M624.5,232v1M624.5,582v1M203.5,217v1M203.5,597v1M637.5,249v1M637.5,565v1M166.5,266v2M166.5,547v2M159.5,279v2M159.5,534v2M194.5,227v1M194.5,587v1M195.5,226v1M195.5,588v1M202.5,218v1M202.5,596v1M620.5,227v1M620.5,587v1M615.5,221v1M615.5,593v1M189.5,233v1M189.5,581v1M673.5,322v3M673.5,490v3M651.5,271v2M651.5,542v2M647.5,264v2M647.5,549v2M611.5,217v1M611.5,597v1M643.5,258v1M643.5,556v1M150.5,298v2M150.5,515v2M618.5,224v2M618.5,589v2M646.5,263v1M646.5,551v1M670.5,313v3M670.5,499v3M614.5,220v1M614.5,594v1M198.5,222v1M198.5,592v1M199.5,221v1M199.5,593v1M678.5,339v4M678.5,472v4M631.5,241v1M631.5,573v1M206.5,213v2M206.5,600v2M205.5,215v1M205.5,599v1M182.5,242v1M182.5,572v1M137.5,335v4M137.5,476v4M173.5,255v1M173.5,559v1M622.5,229v1M622.5,585v1M146.5,308v2M146.5,505v2M193.5,228v1M193.5,586v1M153.5,291v2M153.5,522v2M613.5,219v1M613.5,595v1M641.5,255v1M641.5,559v1M200.5,220v1M200.5,594v1M634.5,245v1M634.5,569v1M167.5,264v2M167.5,549v2M170.5,259v2M170.5,554v2M635.5,246v1M635.5,568v1M187.5,235v2M187.5,578v2M645.5,261v2M645.5,552v2M154.5,289v2M154.5,524v2M672.5,319v3M672.5,493v3M655.5,279v2M655.5,534v2M161.5,275v2M161.5,538v2M204.5,216v1M204.5,598v1M619.5,226v1M619.5,588v1M207.5,212v1M207.5,602v1M658.5,285v2M658.5,528v2M183.5,241v1M183.5,573v1M191.5,230v2M191.5,583v2M612.5,218v1M612.5,596v1M208.5,211v1M208.5,603v1M606.5,211v1M606.5,603v1M636.5,247v2M636.5,566v2M175.5,252v1M175.5,562v1M649.5,268v2M649.5,545v2M171.5,258v1M171.5,556v1M639.5,252v1M639.5,562v1M304,794.5h4M507,794.5h4M153,98.5h1M661,98.5h1M308,795.5h4M503,795.5h4M373,8.5h15M427,8.5h15M270,783.5h2M543,783.5h2M238,770.5h3M574,770.5h3M284,788.5h3M528,788.5h3M275,785.5h3M537,785.5h3M281,27.5h3M531,27.5h3M243,772.5h2M570,772.5h2M146,710.5h1M668,710.5h1M341,12.5h7M467,12.5h7M220,761.5h2M593,761.5h2M187,73.5h1M627,73.5h1M135,700.5h1M679,700.5h1M164,89.5h2M649,89.5h2M224,763.5h2M589,763.5h2M330,14.5h6M479,14.5h6M304,20.5h4M507,20.5h4M363,805.5h10M442,805.5h10M155,718.5h2M658,718.5h2M355,804.5h8M452,804.5h8M230,48.5h2M583,48.5h2M259,35.5h3M553,35.5h3M206,753.5h2M607,753.5h2M178,735.5h1M636,735.5h1M316,17.5h5M494,17.5h5M232,767.5h2M581,767.5h2M312,18.5h4M499,18.5h4M138,111.5h1M676,111.5h1M336,801.5h5M474,801.5h5M142,707.5h1M672,707.5h1M153,716.5h1M661,716.5h1M131,697.5h2M682,697.5h2M213,57.5h2M600,57.5h2M148,712.5h1M666,712.5h1M348,803.5h7M460,803.5h7M257,778.5h2M556,778.5h2M209,59.5h2M604,59.5h2M252,776.5h2M561,776.5h2M241,771.5h2M572,771.5h2M250,39.5h2M563,39.5h2M294,791.5h3M518,791.5h3M355,10.5h8M452,10.5h8M257,36.5h2M556,36.5h2M131,117.5h2M682,117.5h2M330,800.5h6M479,800.5h6M252,38.5h2M561,38.5h2M170,85.5h1M644,85.5h1M278,28.5h3M534,28.5h3M247,40.5h3M565,40.5h3M213,757.5h2M600,757.5h2M148,102.5h1M666,102.5h1M388,7.5h7M418,7.5h9M287,25.5h3M525,25.5h3M196,747.5h2M617,747.5h2M272,784.5h3M540,784.5h3M172,731.5h2M641,731.5h2M139,110.5h1M675,110.5h1M316,797.5h5M494,797.5h5M134,699.5h1M680,699.5h1M290,24.5h4M521,24.5h4M230,766.5h2M583,766.5h2M155,96.5h2M658,96.5h2M308,19.5h4M503,19.5h4M178,79.5h1M636,79.5h1M259,779.5h3M553,779.5h3M264,781.5h3M548,781.5h3M146,104.5h1M668,104.5h1M220,53.5h2M593,53.5h2M125,123.5h1M689,123.5h1M136,113.5h1M678,113.5h1M281,787.5h3M531,787.5h3M284,26.5h3M528,26.5h3M270,31.5h2M543,31.5h2M199,65.5h2M614,65.5h2M363,9.5h10M442,9.5h10M236,769.5h2M577,769.5h2M166,726.5h1M648,726.5h1M204,62.5h2M609,62.5h2M128,694.5h1M686,694.5h1M184,75.5h1M630,75.5h1M325,15.5h5M485,15.5h5M247,774.5h3M565,774.5h3M217,759.5h1M597,759.5h1M164,725.5h2M649,725.5h2M301,21.5h3M511,21.5h3M267,782.5h3M545,782.5h3M141,108.5h1M673,108.5h1M150,714.5h2M663,714.5h2M234,46.5h2M579,46.5h2M254,777.5h3M558,777.5h3M228,49.5h2M585,49.5h2M241,43.5h2M572,43.5h2M301,793.5h3M511,793.5h3M348,11.5h7M460,11.5h7M204,752.5h2M609,752.5h2M194,68.5h2M619,68.5h2M138,703.5h1M676,703.5h1M341,802.5h7M467,802.5h7M194,746.5h2M619,746.5h2M149,713.5h1M665,713.5h1M234,768.5h2M579,768.5h2M175,81.5h1M639,81.5h1M215,758.5h2M598,758.5h2M147,103.5h1M667,103.5h1M179,78.5h2M634,78.5h2M217,55.5h1M597,55.5h1M143,708.5h2M670,708.5h2M145,709.5h1M669,709.5h1M206,61.5h2M607,61.5h2M129,695.5h1M685,695.5h1M236,45.5h2M577,45.5h2M245,773.5h2M568,773.5h2M154,97.5h1M660,97.5h1M176,80.5h2M637,80.5h2M254,37.5h3M558,37.5h3M262,780.5h2M551,780.5h2M262,34.5h2M551,34.5h2M129,119.5h1M685,119.5h1M188,742.5h2M625,742.5h2M185,74.5h2M628,74.5h2M294,23.5h3M518,23.5h3M140,705.5h1M674,705.5h1M267,32.5h3M545,32.5h3M141,706.5h1M673,706.5h1M162,91.5h1M652,91.5h1M218,54.5h2M595,54.5h2M222,762.5h2M591,762.5h2M287,789.5h3M525,789.5h3M245,41.5h2M568,41.5h2M158,720.5h1M656,720.5h1M297,792.5h4M514,792.5h4M133,116.5h1M681,116.5h1M203,751.5h1M611,751.5h1M126,122.5h1M688,122.5h1M278,786.5h3M534,786.5h3M147,711.5h1M667,711.5h1M211,58.5h2M602,58.5h2M325,799.5h5M485,799.5h5M160,92.5h2M653,92.5h2M321,798.5h4M490,798.5h4M182,738.5h2M631,738.5h2M127,121.5h1M687,121.5h1M336,13.5h5M474,13.5h5M191,70.5h2M622,70.5h2M191,744.5h2M622,744.5h2M168,86.5h2M645,86.5h2M201,64.5h2M612,64.5h2M171,730.5h1M643,730.5h1M140,109.5h1M674,109.5h1M198,748.5h1M616,748.5h1M137,112.5h1M677,112.5h1M321,16.5h4M490,16.5h4M226,764.5h2M587,764.5h2M228,765.5h2M585,765.5h2M264,33.5h3M548,33.5h3M218,760.5h2M595,760.5h2M208,754.5h1M606,754.5h1M172,83.5h2M641,83.5h2M163,724.5h1M651,724.5h1M124,124.5h1M690,124.5h1M238,44.5h3M574,44.5h3M130,696.5h1M684,696.5h1M159,93.5h1M655,93.5h1M182,76.5h2M631,76.5h2M157,719.5h1M657,719.5h1M158,94.5h1M656,94.5h1M196,67.5h2M617,67.5h2M136,701.5h1M678,701.5h1M159,721.5h1M655,721.5h1M297,22.5h4M514,22.5h4M203,63.5h1M611,63.5h1M208,60.5h1M606,60.5h1M130,118.5h1M684,118.5h1M226,50.5h2M587,50.5h2M275,29.5h3M537,29.5h3M163,90.5h1M651,90.5h1M290,790.5h4M521,790.5h4M154,717.5h1M660,717.5h1M181,77.5h1M633,77.5h1M215,56.5h2M598,56.5h2M201,750.5h2M612,750.5h2M179,736.5h2M634,736.5h2M167,87.5h1M647,87.5h1M145,105.5h1M669,105.5h1M160,722.5h2M653,722.5h2M199,749.5h2M614,749.5h2M137,702.5h1M677,702.5h1M175,733.5h1M639,733.5h1M171,84.5h1M643,84.5h1M198,66.5h1M616,66.5h1M150,100.5h2M663,100.5h2M166,88.5h1M648,88.5h1M170,729.5h1M644,729.5h1M312,796.5h4M499,796.5h4M181,737.5h1M633,737.5h1M209,755.5h2M604,755.5h2M211,756.5h2M602,756.5h2M184,739.5h1M630,739.5h1M188,72.5h2M625,72.5h2M193,69.5h1M621,69.5h1M222,52.5h2M591,52.5h2M174,82.5h1M640,82.5h1M162,723.5h1M652,723.5h1M149,101.5h1M665,101.5h1M167,727.5h1M647,727.5h1M190,743.5h1M624,743.5h1M143,106.5h2M670,106.5h2M168,728.5h2M645,728.5h2M250,775.5h2M563,775.5h2M125,691.5h1M689,691.5h1M152,715.5h1M662,715.5h1M224,51.5h2M589,51.5h2M232,47.5h2M581,47.5h2M176,734.5h2M637,734.5h2M243,42.5h2M570,42.5h2M190,71.5h1M624,71.5h1M272,30.5h3M540,30.5h3M174,732.5h1M640,732.5h1M134,115.5h1M680,115.5h1M187,741.5h1M627,741.5h1M193,745.5h1M621,745.5h1M152,99.5h1M662,99.5h1M142,107.5h1M672,107.5h1M127,693.5h1M687,693.5h1M124,690.5h1M690,690.5h1M185,740.5h2M628,740.5h2M135,114.5h1M679,114.5h1M157,95.5h1M657,95.5h1M128,120.5h1M686,120.5h1M126,692.5h1M688,692.5h1M139,704.5h1M675,704.5h1M133,698.5h1M681,698.5h1M73.5,187v1M73.5,627v1M95.5,157v1M95.5,657v1M26.5,284v3M26.5,528v3M734.5,176v2M734.5,637v2M699.5,134v1M699.5,680v1M782.5,267v3M782.5,545v3M87.5,167v1M87.5,647v1M88.5,166v1M88.5,648v1M90.5,163v1M90.5,651v1M7.5,388v39M729.5,170v1M729.5,644v1M13.5,336v5M13.5,474v5M98.5,153v1M98.5,661v1M23.5,294v3M23.5,518v3M774.5,247v3M774.5,565v3M694.5,128v1M694.5,686v1M106.5,143v2M106.5,670v2M802.5,341v7M802.5,467v7M42.5,243v2M42.5,570v2M54.5,218v2M54.5,595v2M798.5,321v4M798.5,490v4M101.5,149v1M101.5,665v1M731.5,172v2M731.5,641v2M58.5,211v2M58.5,602v2M61.5,206v2M61.5,607v2M12.5,341v7M12.5,467v7M16.5,321v4M16.5,490v4M18.5,312v4M18.5,499v4M803.5,348v7M803.5,460v7M78.5,179v2M78.5,634v2M717.5,154v1M717.5,660v1M805.5,363v10M805.5,442v10M25.5,287v3M25.5,525v3M11.5,348v7M11.5,460v7M796.5,312v4M796.5,499v4M793.5,301v3M793.5,511v3M799.5,325v5M799.5,485v5M74.5,185v2M74.5,628v2M108.5,141v1M108.5,673v1M89.5,164v2M89.5,649v2M50.5,226v2M50.5,587v2M109.5,140v1M109.5,674v1M9.5,363v10M9.5,442v10M789.5,287v3M789.5,525v3M15.5,325v5M15.5,485v5M781.5,264v3M781.5,548v3M768.5,234v2M768.5,579v2M29.5,275v3M29.5,537v3M792.5,297v4M792.5,514v4M65.5,199v2M65.5,614v2M71.5,190v1M71.5,624v1M788.5,284v3M788.5,528v3M75.5,184v1M75.5,630v1M784.5,272v3M784.5,540v3M785.5,275v3M785.5,537v3M22.5,297v4M22.5,514v4M10.5,355v8M10.5,452v8M8.5,373v15M8.5,427v15M801.5,336v5M801.5,474v5M68.5,194v2M68.5,619v2M767.5,232v2M767.5,581v2M740.5,185v2M740.5,628v2M28.5,278v3M28.5,534v3M64.5,201v2M64.5,612v2M35.5,259v3M35.5,553v3M47.5,232v2M47.5,581v2M763.5,224v2M763.5,589v2M804.5,355v8M804.5,452v8M775.5,250v2M775.5,563v2M60.5,208v1M60.5,606v1M32.5,267v3M32.5,545v3M800.5,330v6M800.5,479v6M743.5,190v1M743.5,624v1M103.5,147v1M103.5,667v1M111.5,138v1M111.5,676v1M14.5,330v6M14.5,479v6M791.5,294v3M791.5,518v3M715.5,152v1M715.5,662v1M100.5,150v2M100.5,663v2M31.5,270v2M31.5,543v2M37.5,254v3M37.5,558v3M38.5,252v2M38.5,561v2M744.5,191v2M744.5,622v2M795.5,308v4M795.5,503v4M762.5,222v2M762.5,591v2M92.5,160v2M92.5,653v2M44.5,238v3M44.5,574v3M45.5,236v2M45.5,577v2M758.5,215v2M758.5,598v2M765.5,228v2M765.5,585v2M706.5,141v1M706.5,673v1M771.5,241v2M771.5,572v2M55.5,217v1M55.5,597v1M83.5,172v2M83.5,641v2M722.5,160v2M722.5,653v2M39.5,250v2M39.5,563v2M51.5,224v2M51.5,589v2M779.5,259v3M779.5,553v3M94.5,158v1M94.5,656v1M757.5,213v2M757.5,600v2M691.5,125v1M691.5,689v1M713.5,149v1M713.5,665v1M692.5,126v1M692.5,688v1M714.5,150v2M714.5,663v2M82.5,174v1M82.5,640v1M728.5,168v2M728.5,645v2M753.5,206v2M753.5,607v2M62.5,204v2M62.5,609v2M742.5,188v2M742.5,625v2M36.5,257v2M36.5,556v2M778.5,257v2M778.5,556v2M746.5,194v2M746.5,619v2M19.5,308v4M19.5,503v4M749.5,199v2M749.5,614v2M46.5,234v2M46.5,579v2M43.5,241v2M43.5,572v2M745.5,193v1M745.5,621v1M49.5,228v2M49.5,585v2M777.5,254v3M777.5,558v3M72.5,188v2M72.5,625v2M756.5,211v2M756.5,602v2M86.5,168v2M86.5,645v2M739.5,184v1M739.5,630v1M719.5,157v1M719.5,657v1M20.5,304v4M20.5,507v4M96.5,155v2M96.5,658v2M700.5,135v1M700.5,679v1M748.5,198v1M748.5,616v1M107.5,142v1M107.5,672v1M52.5,222v2M52.5,591v2M707.5,142v1M707.5,672v1M53.5,220v2M53.5,593v2M773.5,245v2M773.5,568v2M56.5,215v2M56.5,598v2M119.5,129v1M119.5,685v1M738.5,182v2M738.5,631v2M794.5,304v4M794.5,507v4M79.5,178v1M79.5,636v1M114.5,135v1M114.5,679v1M754.5,208v1M754.5,606v1M113.5,136v1M113.5,678v1M710.5,146v1M710.5,668v1M770.5,238v3M770.5,574v3M718.5,155v2M718.5,658v2M732.5,174v1M732.5,640v1M736.5,179v2M736.5,634v2M797.5,316v5M797.5,494v5M786.5,278v3M786.5,534v3M769.5,236v2M769.5,577v2M33.5,264v3M33.5,548v3M17.5,316v5M17.5,494v5M76.5,182v2M76.5,631v2M40.5,247v3M40.5,565v3M34.5,262v2M34.5,551v2M91.5,162v1M91.5,652v1M115.5,134v1M115.5,680v1M116.5,133v1M116.5,681v1M735.5,178v1M735.5,636v1M84.5,171v1M84.5,643v1M41.5,245v2M41.5,568v2M716.5,153v1M716.5,661v1M696.5,130v1M696.5,684v1M711.5,147v1M711.5,667v1M783.5,270v2M783.5,543v2M697.5,131v2M697.5,682v2M766.5,230v2M766.5,583v2M118.5,130v1M118.5,684v1M776.5,252v2M776.5,561v2M703.5,138v1M703.5,676v1M787.5,281v3M787.5,531v3M780.5,262v2M780.5,551v2M30.5,272v3M30.5,540v3M27.5,281v3M27.5,531v3M67.5,196v2M67.5,617v2M747.5,196v2M747.5,617v2M750.5,201v2M750.5,612v2M698.5,133v1M698.5,681v1M70.5,191v2M70.5,622v2M120.5,128v1M120.5,686v1M790.5,290v4M790.5,521v4M66.5,198v1M66.5,616v1M760.5,218v2M760.5,595v2M112.5,137v1M112.5,677v1M117.5,131v2M117.5,682v2M764.5,226v2M764.5,587v2M93.5,159v1M93.5,655v1M727.5,167v1M727.5,647v1M104.5,146v1M104.5,668v1M701.5,136v1M701.5,678v1M99.5,152v1M99.5,662v1M752.5,204v2M752.5,609v2M21.5,301v3M21.5,511v3M24.5,290v4M24.5,521v4M77.5,181v1M77.5,633v1M80.5,176v2M80.5,637v2M695.5,129v1M695.5,685v1M720.5,158v1M720.5,656v1M721.5,159v1M721.5,655v1M737.5,181v1M737.5,633v1M57.5,213v2M57.5,600v2M761.5,220v2M761.5,593v2M709.5,145v1M709.5,669v1M704.5,139v1M704.5,675v1M772.5,243v2M772.5,570v2M123.5,125v1M123.5,689v1M708.5,143v2M708.5,670v2M723.5,162v1M723.5,652v1M733.5,175v1M733.5,639v1M110.5,139v1M110.5,675v1M724.5,163v1M724.5,651v1M725.5,164v2M725.5,649v2M105.5,145v1M105.5,669v1M705.5,140v1M705.5,674v1M97.5,154v1M97.5,660v1M759.5,217v1M759.5,597v1M712.5,148v1M712.5,666v1M755.5,209v2M755.5,604v2M751.5,203v1M751.5,611v1M48.5,230v2M48.5,583v2M121.5,127v1M121.5,687v1M59.5,209v2M59.5,604v2M726.5,166v1M726.5,648v1M741.5,187v1M741.5,627v1M702.5,137v1M702.5,677v1M102.5,148v1M102.5,666v1M81.5,175v1M81.5,639v1M63.5,203v1M63.5,611v1M730.5,171v1M730.5,643v1M122.5,126v1M122.5,688v1M693.5,127v1M693.5,687v1M85.5,170v1M85.5,644v1M69.5,193v1M69.5,621v1" fill="none" stroke="#c4c4c4" stroke-width="1" shape-rendering="crispEdges"/><path d="M380,435.5h1M434,435.5h1M394,370.5h3M418,370.5h3M394,444.5h3M418,444.5h3M401,446.5h13M386,440.5h2M427,440.5h2M382,437.5h1M432,437.5h1M381,436.5h1M433,436.5h1M389,442.5h2M424,442.5h2M383,438.5h2M430,438.5h2M391,443.5h3M421,443.5h3M397,445.5h4M414,445.5h4M383,376.5h2M430,376.5h2M389,372.5h2M424,372.5h2M382,377.5h1M432,377.5h1M397,369.5h1M415,369.5h3M380,379.5h1M434,379.5h1M391,371.5h3M421,371.5h3M388,373.5h1M426,373.5h1M386,374.5h2M427,374.5h2M381,378.5h1M433,378.5h1M388,441.5h1M426,441.5h1M385,375.5h1M429,375.5h1M385,439.5h1M429,439.5h1M379.5,380v1M379.5,434v1M446.5,401v13M443.5,391v3M443.5,421v3M369.5,397v4M369.5,414v4M375.5,385v1M375.5,429v1M368.5,401v13M376.5,383v2M376.5,430v2M377.5,382v1M377.5,432v1M378.5,381v1M378.5,433v1M444.5,394v3M444.5,418v3M372.5,389v2M372.5,424v2M374.5,386v2M374.5,427v2M440.5,386v2M440.5,427v2M435.5,380v1M435.5,434v1M373.5,388v1M373.5,426v1M370.5,394v3M370.5,418v3M441.5,388v1M441.5,426v1M445.5,397v4M445.5,414v4M438.5,383v2M438.5,430v2M439.5,385v1M439.5,429v1M442.5,389v2M442.5,424v2M371.5,391v3M371.5,421v3M436.5,381v1M436.5,433v1M437.5,382v1M437.5,432v1" fill="none" stroke="#f40000" stroke-width="1" shape-rendering="crispEdges"/><g font-family="DejaVu Sans, Liberation Sans, sans-serif" font-size="10" fill="#ffff9a" text-anchor="middle"><text x="405.6" y="11.2">313</text><text x="405.6" y="131.2">219</text><text x="405.6" y="251.2">125</text><text x="405.6" y="371.2">31</text></g><path d="M88,687.5h7" stroke="#e2a800" stroke-width="1.4"/><path d="M129,741.5h7M132.5,738v7" stroke="#e08000" stroke-width="1.2"/><rect x="8" y="758" width="245.5" height="45.5" fill="#000"/><rect x="9.5" y="759.5" width="243" height="43" fill="none" stroke="#a8a8a8" stroke-width="1"/><g fill="none" stroke="#00e8f8" stroke-width="1.1"><circle cx="60.5" cy="780.5" r="4"/><path d="M58,780.5h5M82,780.5h7.5"/><circle cx="110.5" cy="780.5" r="4"/><path d="M108,780.5h5M110.5,778.0v5M132,780.5h7.4M135.7,776.8v7.4"/></g><g fill="none" stroke="#f8f800" stroke-width="1.1"><circle cx="60.5" cy="793.5" r="4"/><path d="M58,793.5h5M82,793.5h7.5"/><circle cx="110.5" cy="793.5" r="4"/><path d="M108,793.5h5M110.5,791.0v5M132,793.5h7.4M135.7,789.8v7.4"/></g><rect x="685" y="792" width="121" height="14" fill="#000"/></svg></div>
<div class="a cf" style="left:12.80px;top:763px;font-size:10px;letter-spacing:-0.29px;color:#e6e6e6;">Symbols</div>
<div class="a cf" style="left:52.65px;top:763px;font-size:10px;color:#e6e6e6;">-CG</div>
<div class="a cf" style="left:77.55px;top:763px;font-size:10px;color:#e6e6e6;">-IC</div>
<div class="a cf" style="left:98.05px;top:763px;font-size:10px;color:#e6e6e6;">+CG</div>
<div class="a cf" style="left:123.05px;top:763px;font-size:10px;color:#e6e6e6;">+IC</div>
<div class="a cf" style="left:152.60px;top:763px;font-size:10px;letter-spacing:-0.42px;color:#e6e6e6;">Strike age color codes</div>
<div class="a cf" style="left:12.50px;top:776px;font-size:10px;letter-spacing:-0.45px;color:#e6e6e6;">Recent</div>
<div class="a cf" style="left:12.90px;top:789px;font-size:10px;letter-spacing:0.20px;color:#e6e6e6;">Old</div>
<div class="a cf" style="left:152.80px;top:776px;font-size:10px;letter-spacing:-0.73px;color:#dcc800;">15+</div>
<div class="a cf" style="left:187.90px;top:776px;font-size:10px;letter-spacing:-0.88px;color:#e0a000;">30+</div>
<div class="a cf" style="left:222.85px;top:776px;font-size:10px;letter-spacing:-1.00px;color:#e08400;">45+</div>
<div class="a cf" style="left:153.15px;top:789px;font-size:10px;letter-spacing:-0.90px;color:#d86400;">60+</div>
<div class="a cf" style="left:187.85px;top:789px;font-size:10px;letter-spacing:-0.85px;color:#d84400;">75+</div>
<div class="a cf" style="left:222.75px;top:789px;font-size:10px;letter-spacing:-0.95px;color:#d82000;">90+</div>
<div class="a cf" style="left:687.85px;top:794px;font-size:10px;letter-spacing:-0.39px;color:#ffffff;">©2005 Astrogenic Systems</div>
<div class="panel" style="top:8px;height:318px;"></div>
<div class="panel" style="top:333px;height:113px;"></div>
<div class="panel" style="top:453px;height:348px;"></div>
<div class="btn" style="left:819px;top:16px;width:58px;background:#5a0000;"></div>
<div class="a b sf" style="left:823.62px;top:20px;letter-spacing:-0.73px;color:#dcdcdc;">STRIKE</div>
<div class="btn" style="left:883px;top:16px;width:58px;background:#303030;"></div>
<div class="a b sf" style="left:890.46px;top:20px;letter-spacing:-0.37px;color:#b4b4b4;">NOISE</div>
<div class="btn" style="left:994px;top:16px;width:128px;background:#303030;"></div>
<div class="a b" style="left:997.52px;top:20px;letter-spacing:0.29px;">Bng 228°</div>
<div class="a b gr" style="left:1074.82px;top:20px;letter-spacing:0.47px;">330mi</div>
<div class="hdr" style="left:821px;top:64px;"></div>
<div class="a" style="left:828.43px;top:67px;font-size:11px;letter-spacing:0.55px;">Strikes/min</div>
<div class="a b" style="left:883.60px;top:89px;font-size:28px;color:#fff;">0</div>
<div class="hdr" style="left:931px;top:64px;"></div>
<div class="a" style="left:942.89px;top:67px;font-size:11px;letter-spacing:0.51px;">Close/min</div>
<div class="a b" style="left:993.60px;top:89px;font-size:28px;color:#fff;">0</div>
<div class="hdr" style="left:1041px;top:64px;"></div>
<div class="a" style="left:1049.65px;top:67px;font-size:11px;letter-spacing:0.42px;">Noises/min</div>
<div class="a b" style="left:1103.60px;top:89px;font-size:28px;color:#c0c0c0;">0</div>
<div class="a" style="left:826.96px;top:133px;letter-spacing:0.29px;">Total Strikes</div>
<div class="a" style="left:887.94px;top:151px;">40</div>
<div class="a" style="left:944.76px;top:133px;letter-spacing:0.38px;">Total Close</div>
<div class="a" style="left:1005.56px;top:151px;">0</div>
<div class="a g" style="left:1047.66px;top:133px;letter-spacing:0.36px;">Total Noises</div>
<div class="a g" style="left:1107.82px;top:151px;">54</div>
<div class="a g" style="left:819.80px;top:205px;letter-spacing:0.31px;">Lightning type distribution</div>
<div class="hr" style="top:217px;"></div>
<div class="a b" style="left:820.45px;top:227px;font-size:11px;letter-spacing:0.17px;">Cloud-ground</div>
<div class="a" style="left:912.14px;top:226px;">+</div>
<div class="bar" style="left:925px;top:227px;"><i style="width:10px;background:#ff0000;"></i></div>
<div class="a b" style="left:979.42px;top:227px;font-size:11px;letter-spacing:1.06px;">20%</div>
<div class="a b" style="left:1014.85px;top:227px;font-size:11px;">−</div>
<div class="bar" style="left:1028px;top:227px;"><i style="width:24px;background:#99ccff;"></i></div>
<div class="a b" style="left:1081.77px;top:227px;font-size:11px;letter-spacing:1.03px;">50%</div>
<div class="a b g" style="left:820.45px;top:251px;font-size:11px;letter-spacing:0.56px;">Count</div>
<div class="a b" style="left:924.54px;top:251px;font-size:11px;">8</div>
<div class="a b" style="left:1027.32px;top:251px;font-size:11px;">20</div>
<div class="a b" style="left:820.01px;top:281px;font-size:11px;letter-spacing:0.19px;">Intracloud</div>
<div class="a" style="left:912.14px;top:280px;">+</div>
<div class="bar" style="left:925px;top:281px;"><i style="width:7px;background:#ee5fae;"></i></div>
<div class="a b" style="left:979.03px;top:281px;font-size:11px;letter-spacing:1.25px;">15%</div>
<div class="a b" style="left:1014.85px;top:281px;font-size:11px;">−</div>
<div class="bar" style="left:1028px;top:281px;"><i style="width:7px;background:#00e000;"></i></div>
<div class="a b" style="left:1081.33px;top:281px;font-size:11px;letter-spacing:1.25px;">15%</div>
<div class="a b g" style="left:820.45px;top:305px;font-size:11px;letter-spacing:0.56px;">Count</div>
<div class="a b" style="left:924.54px;top:305px;font-size:11px;">6</div>
<div class="a b" style="left:1027.54px;top:305px;font-size:11px;">6</div>
<div class="a b gr" style="left:821.50px;top:340px;font-size:15px;letter-spacing:0.45px;">2<span class="sl">/</span>24<span class="sl">/</span>2026 11:25:02 AM</div>
<div class="hr" style="top:358px;"></div>
<div class="a" style="left:820.52px;top:378px;letter-spacing:0.39px;">Squelch</div>
<div class="a" style="left:909.12px;top:378px;">0</div>
<div class="a" style="left:980.38px;top:378px;letter-spacing:0.67px;">Upload</div>
<div class="a g" style="left:1060.20px;top:378px;letter-spacing:0.56px;">Disabled</div>
<div class="a" style="left:820.10px;top:398px;letter-spacing:0.54px;">Persistence</div>
<div class="a" style="left:909.12px;top:398px;letter-spacing:0.18px;">90 min</div>
<div class="a" style="left:980.74px;top:398px;letter-spacing:0.69px;">Capture</div>
<div class="a gr" style="left:1061.28px;top:398px;letter-spacing:-0.09px;">Active</div>
<div class="a" style="left:820.10px;top:418px;letter-spacing:0.58px;">Range</div>
<div class="a" style="left:909.00px;top:418px;letter-spacing:0.22px;">313 mi</div>
<div class="a" style="left:980.20px;top:418px;letter-spacing:0.23px;">Receiver</div>
<div class="a gr" style="left:1060.20px;top:418px;letter-spacing:0.63px;">Enabled</div>
<div class="a g" style="left:820.68px;top:465px;letter-spacing:0.30px;">Uptime</div>
<div class="a" style="left:909.38px;top:465px;letter-spacing:0.47px;">1031:10</div>
<div class="a g" style="left:980.50px;top:465px;letter-spacing:0.40px;">Peak time</div>
<div class="a g" style="left:1060.20px;top:465px;letter-spacing:0.81px;">Plot</div>
<div class="a g" style="left:820.50px;top:488px;letter-spacing:0.67px;">Peak rate</div>
<div class="a" style="left:908.70px;top:488px;letter-spacing:0.32px;">2/min</div>
<div class="a" style="left:980.86px;top:488px;letter-spacing:0.41px;">6:24 AM</div>
<div class="a" style="left:1060.62px;top:488px;letter-spacing:0.35px;">Strike</div>
<div class="a g" style="left:822.76px;top:518px;letter-spacing:0.50px;">Trend graph</div>
<div class="a" style="left:908.16px;top:518px;letter-spacing:0.17px;">60 min</div>
<svg style="position:absolute;left:812px;top:530px;" width="326" height="275" viewBox="812 530 326 275" shape-rendering="crispEdges"><g stroke="#c8c8c8" stroke-width="1" fill="none"><path d="M822.5 777.5H1088.5V542.5"/><path d="M822.5 774V779"/><path d="M866.5 774V779"/><path d="M911.5 774V779"/><path d="M955.5 774V779"/><path d="M999.5 774V779"/><path d="M1044.5 774V779"/><path d="M1088.5 774V779"/><path d="M1084 542.5H1089"/><path d="M1084 581.5H1089"/><path d="M1084 620.5H1089"/><path d="M1084 660.5H1089"/><path d="M1084 699.5H1089"/><path d="M1084 738.5H1089"/></g><g stroke="#ffffff" stroke-width="1" fill="none" shape-rendering="auto"><path d="M844.5 777.5L846.5 769.5H849.5L851 777.5"/><path d="M930.5 777.5L932.5 769.5H936.5L938.5 777.5"/><path d="M988.8 777.5L990.6 769.5H993.6L996 777.5"/></g></svg>
<div class="a g" style="left:819.56px;top:783px;">60</div>
<div class="a g" style="left:863.85px;top:783px;">50</div>
<div class="a g" style="left:908.50px;top:783px;">40</div>
<div class="a g" style="left:952.55px;top:783px;">30</div>
<div class="a g" style="left:996.90px;top:783px;">20</div>
<div class="a g" style="left:1040.83px;top:783px;">10</div>
<div class="a g" style="left:1085.72px;top:783px;">0</div>
<div class="a g" style="left:1098.92px;top:783px;">min</div>
<div class="a g" style="left:1092.10px;top:537px;">30</div>
<div class="a g" style="left:1092.10px;top:615px;">20</div>
<div class="a g" style="left:1091.68px;top:694px;">10</div>
</body></html>
